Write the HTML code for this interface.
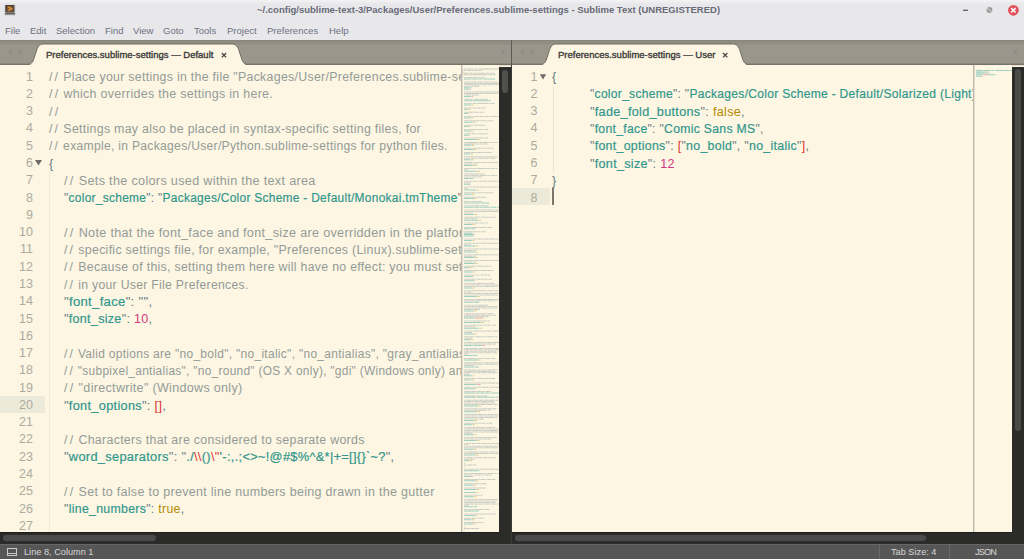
<!DOCTYPE html>
<html><head><meta charset="utf-8">
<style>
*{margin:0;padding:0;box-sizing:border-box}
html,body{width:1024px;height:559px;overflow:hidden;background:#fdf6e3;font-family:"Liberation Sans",sans-serif}
.abs{position:absolute}
#titlebar{left:0;top:0;width:1024px;height:40px;background:linear-gradient(#f3f3f4 0px,#eeeef0 2px,#e8e8eb 4px,#e8e8eb 100%)}
#title{left:257px;top:3px;font-weight:bold;font-size:9.5px;color:#686b78;white-space:nowrap;line-height:14px}
.menu{top:24px;font-size:9.5px;color:#6e7080;line-height:14px;white-space:nowrap}
#tabbar{left:0;top:40px;width:1024px;height:25px;background:linear-gradient(#85817a 0px,#8f8b81 1px,#928e84 4px,#9a968b 5px,#9a968b 100%)}
.tablabel{top:49px;font-weight:normal;font-size:9.5px;color:#3a3a3a;-webkit-text-stroke:0.35px #3a3a3a;white-space:nowrap;line-height:12px}
.pane{top:65px;height:467px;background:#fdf6e3;overflow:hidden}
.cl{position:absolute;font-size:12.5px;letter-spacing:0.3px;line-height:17px;white-space:pre;color:#657b83;transform-origin:0 0}
.ln{position:absolute;font-size:12.5px;line-height:17px;white-space:pre;color:#adab9f;text-align:right}
.c{color:#939b97}
.sl{letter-spacing:2.2px}
.sl2{letter-spacing:1.6px}
.s{color:#31968c;-webkit-text-stroke:0.2px #31968c}
.q{color:#657b83}
.n{color:#d33682}
.k{color:#b58900}
.r{color:#dc322f}
#status{left:0;top:544px;width:1024px;height:15px;background:#565656;border-top:1px solid #666}
.st{top:546px;font-size:9.2px;color:#d6d6d6;line-height:12px;white-space:nowrap}
</style></head><body>
<div id="titlebar" class="abs"></div>
<div id="title" class="abs">~/.config/sublime-text-3/Packages/User/Preferences.sublime-settings - Sublime Text (UNREGISTERED)</div>
<div class="abs menu" style="left:5px">File</div>
<div class="abs menu" style="left:30px">Edit</div>
<div class="abs menu" style="left:56px">Selection</div>
<div class="abs menu" style="left:105px">Find</div>
<div class="abs menu" style="left:133px">View</div>
<div class="abs menu" style="left:163px">Goto</div>
<div class="abs menu" style="left:194px">Tools</div>
<div class="abs menu" style="left:227px">Project</div>
<div class="abs menu" style="left:267px">Preferences</div>
<div class="abs menu" style="left:329px">Help</div>
<svg class="abs" style="left:0;top:0" width="1024" height="22">
  <rect x="4.5" y="4.3" width="11" height="11.2" rx="0.8" fill="#f4f4f4" stroke="#c9c9cc" stroke-width="0.6"/>
  <rect x="5.3" y="5" width="9.2" height="7.6" fill="#3a3735"/>
  <rect x="6.5" y="5.8" width="7" height="6" fill="#7a5530"/>
  <path d="M8.3 7 L11.5 8.8 L8.3 10.6" fill="none" stroke="#d8923f" stroke-width="1.5"/>
  <rect x="5" y="13.2" width="10" height="1.3" fill="#3a3a3a"/>
  <rect x="963" y="9.6" width="5" height="1.4" fill="#6a6a6a"/>
  <circle cx="989.5" cy="10" r="2.9" fill="#9a9a9a"/>
  <path d="M987.3 7.8 L991.7 12.2" stroke="#e8e8eb" stroke-width="0.9"/>
  <circle cx="1013.4" cy="10.3" r="5.4" fill="#e0525c"/>
  <path d="M1011.2 8.1 L1015.6 12.5 M1015.6 8.1 L1011.2 12.5" stroke="#fff" stroke-width="1.6"/>
</svg>
<div id="tabbar" class="abs"></div>
<svg class="abs" style="left:0;top:0" width="1024" height="66" viewBox="0 0 1024 66">
  <rect x="0" y="63.6" width="1024" height="1.6" fill="#77736a"/>
  <path d="M24.2 65.5 C30.2 65.5 32.2 63 33.4 60 L36.9 49.5 C38.2 45.5 40.2 44 44.2 44 L231.3 44 C235.3 44 237.3 45.5 238.6 49.5 L242.1 60 C243.3 63 245.3 65.5 251.3 65.5 Z" fill="#fdf6e3" stroke="#716d63" stroke-width="1"/>
  <rect x="20" y="65" width="240" height="2" fill="#fdf6e3"/>
  <path d="M537.0 65.5 C543.0 65.5 545.0 63 546.2 60 L549.7 49.5 C551.0 45.5 553.0 44 557.0 44 L732.2 44 C736.2 44 738.2 45.5 739.5 49.5 L743.0 60 C744.2 63 746.2 65.5 752.2 65.5 Z" fill="#fdf6e3" stroke="#716d63" stroke-width="1"/>
  <rect x="530" y="65" width="230" height="2" fill="#fdf6e3"/>
  <path d="M12 48.5 L7 52 L12 55.5 Z" fill="#948f85"/>
  <path d="M18 48.5 L23 52 L18 55.5 Z" fill="#948f85"/>
  <path d="M524 48.5 L519 52 L524 55.5 Z" fill="#948f85"/>
  <path d="M530 48.5 L535 52 L530 55.5 Z" fill="#948f85"/>
  <path d="M500.5 50 L506 50 L503.2 54.5 Z" fill="#8e8d89"/>
  <path d="M1012.5 50 L1018 50 L1015.2 54.5 Z" fill="#8e8d89"/>
  <rect x="511" y="40" width="1" height="26" fill="#5e5b55"/>
  <path d="M221.8 53 L226.2 57.4 M226.2 53 L221.8 57.4" stroke="#4a4a48" stroke-width="1.3"/>
  <path d="M723 53 L727.4 57.4 M727.4 53 L723 57.4" stroke="#4a4a48" stroke-width="1.3"/>
</svg>
<div class="abs tablabel" style="left:46px">Preferences.sublime-settings — Default</div>
<div class="abs tablabel" style="left:558px">Preferences.sublime-settings — User</div>

<div class="abs pane" style="left:0;width:462px">
  <div class="abs" style="left:0;top:331.20px;width:45px;height:16.6px;background:#eeead9"></div>
  <div class="abs" style="left:49px;top:106px;width:1px;height:361px;background:#efe9d6"></div>
  <div class="ln" style="left:0;width:33px;top:3.60px">1</div>
<div class="ln" style="left:0;width:33px;top:20.88px">2</div>
<div class="ln" style="left:0;width:33px;top:38.16px">3</div>
<div class="ln" style="left:0;width:33px;top:55.44px">4</div>
<div class="ln" style="left:0;width:33px;top:72.72px">5</div>
<div class="ln" style="left:0;width:33px;top:90.00px">6</div>
<div class="ln" style="left:0;width:33px;top:107.28px">7</div>
<div class="ln" style="left:0;width:33px;top:124.56px">8</div>
<div class="ln" style="left:0;width:33px;top:141.84px">9</div>
<div class="ln" style="left:0;width:33px;top:159.12px">10</div>
<div class="ln" style="left:0;width:33px;top:176.40px">11</div>
<div class="ln" style="left:0;width:33px;top:193.68px">12</div>
<div class="ln" style="left:0;width:33px;top:210.96px">13</div>
<div class="ln" style="left:0;width:33px;top:228.24px">14</div>
<div class="ln" style="left:0;width:33px;top:245.52px">15</div>
<div class="ln" style="left:0;width:33px;top:262.80px">16</div>
<div class="ln" style="left:0;width:33px;top:280.08px">17</div>
<div class="ln" style="left:0;width:33px;top:297.36px">18</div>
<div class="ln" style="left:0;width:33px;top:314.64px">19</div>
<div class="ln" style="left:0;width:33px;top:331.92px">20</div>
<div class="ln" style="left:0;width:33px;top:349.20px">21</div>
<div class="ln" style="left:0;width:33px;top:366.48px">22</div>
<div class="ln" style="left:0;width:33px;top:383.76px">23</div>
<div class="ln" style="left:0;width:33px;top:401.04px">24</div>
<div class="ln" style="left:0;width:33px;top:418.32px">25</div>
<div class="ln" style="left:0;width:33px;top:435.60px">26</div>
<div class="ln" style="left:0;width:33px;top:452.88px">27</div>
  <svg class="abs" style="left:0;top:0" width="60" height="120"><path d="M35 95 L42 95 L38.5 100.5 Z" fill="#6f6b6b"/></svg>
  <div class="cl" id="L1" style="left:49px;top:4.20px;transform:scaleX(0.9870)"><span class="c"><span class="sl">/</span><span class="sl2">/</span> Place your settings in the file "Packages/User/Preferences.sublime-settings",</span></div>
<div class="cl" id="L2" style="left:49px;top:21.48px;transform:scaleX(0.9958)"><span class="c"><span class="sl">/</span><span class="sl2">/</span> which overrides the settings in here.</span></div>
<div class="cl" id="L3" style="left:49px;top:38.76px;transform:scaleX(1.0000)"><span class="c"><span class="sl">/</span><span class="sl2">/</span></span></div>
<div class="cl" id="L4" style="left:49px;top:56.04px;transform:scaleX(0.9879)"><span class="c"><span class="sl">/</span><span class="sl2">/</span> Settings may also be placed in syntax-specific setting files, for</span></div>
<div class="cl" id="L5" style="left:49px;top:73.32px;transform:scaleX(0.9697)"><span class="c"><span class="sl">/</span><span class="sl2">/</span> example, in Packages/User/Python.sublime-settings for python files.</span></div>
<div class="cl" id="L6" style="left:49px;top:90.60px;transform:scaleX(1.0000)"><span class="q">{</span></div>
<div class="cl" id="L7" style="left:64.1px;top:107.88px;transform:scaleX(1.0129)"><span class="c"><span class="sl">/</span><span class="sl2">/</span> Sets the colors used within the text area</span></div>
<div class="cl" id="L8" style="left:64.1px;top:125.16px;transform:scaleX(0.9542)"><span class="q">"</span><span class="s">color_scheme</span><span class="q">": "</span><span class="s">Packages/Color Scheme - Default/Monokai.tmTheme</span><span class="q">",</span></div>
<div class="cl" id="L10" style="left:64.1px;top:159.72px;transform:scaleX(1.0104)"><span class="c"><span class="sl">/</span><span class="sl2">/</span> Note that the font_face and font_size are overridden in the platform</span></div>
<div class="cl" id="L11" style="left:64.1px;top:177.00px;transform:scaleX(0.9872)"><span class="c"><span class="sl">/</span><span class="sl2">/</span> specific settings file, for example, "Preferences (Linux).sublime-settings".</span></div>
<div class="cl" id="L12" style="left:64.1px;top:194.28px;transform:scaleX(0.9862)"><span class="c"><span class="sl">/</span><span class="sl2">/</span> Because of this, setting them here will have no effect: you must set them</span></div>
<div class="cl" id="L13" style="left:64.1px;top:211.56px;transform:scaleX(0.9778)"><span class="c"><span class="sl">/</span><span class="sl2">/</span> in your User File Preferences.</span></div>
<div class="cl" id="L14" style="left:64.1px;top:228.84px;transform:scaleX(1.0465)"><span class="q">"</span><span class="s">font_face</span><span class="q">": "",</span></div>
<div class="cl" id="L15" style="left:64.1px;top:246.12px;transform:scaleX(1.0026)"><span class="q">"</span><span class="s">font_size</span><span class="q">": </span><span class="n">10</span><span class="q">,</span></div>
<div class="cl" id="L17" style="left:64.1px;top:280.68px;transform:scaleX(0.9596)"><span class="c"><span class="sl">/</span><span class="sl2">/</span> Valid options are "no_bold", "no_italic", "no_antialias", "gray_antialias",</span></div>
<div class="cl" id="L18" style="left:64.1px;top:297.96px;transform:scaleX(0.9528)"><span class="c"><span class="sl">/</span><span class="sl2">/</span> "subpixel_antialias", "no_round" (OS X only), "gdi" (Windows only) and</span></div>
<div class="cl" id="L19" style="left:64.1px;top:315.24px;transform:scaleX(1.0046)"><span class="c"><span class="sl">/</span><span class="sl2">/</span> "directwrite" (Windows only)</span></div>
<div class="cl" id="L20" style="left:64.1px;top:332.52px;transform:scaleX(1.0203)"><span class="q">"</span><span class="s">font_options</span><span class="q">": </span><span class="r">[]</span><span class="q">,</span></div>
<div class="cl" id="L22" style="left:64.1px;top:367.08px;transform:scaleX(0.9911)"><span class="c"><span class="sl">/</span><span class="sl2">/</span> Characters that are considered to separate words</span></div>
<div class="cl" id="L23" style="left:64.1px;top:384.36px;transform:scaleX(1.0241)"><span class="q">"</span><span class="s">word_separators</span><span class="q">": "</span><span class="s">./</span><span class="r">\\</span><span class="s">()</span><span class="r">\"</span><span class="s">'-:,.;&lt;&gt;~!@#$%^&amp;*|+=[]{}`~?</span><span class="q">",</span></div>
<div class="cl" id="L25" style="left:64.1px;top:418.92px;transform:scaleX(0.9996)"><span class="c"><span class="sl">/</span><span class="sl2">/</span> Set to false to prevent line numbers being drawn in the gutter</span></div>
<div class="cl" id="L26" style="left:64.1px;top:436.20px;transform:scaleX(0.9854)"><span class="q">"</span><span class="s">line_numbers</span><span class="q">": </span><span class="k">true</span><span class="q">,</span></div>
</div>
<div class="abs pane" style="left:512px;width:462px">
  <div class="abs" style="left:0;top:122.90px;width:38px;height:17px;background:#eeead9"></div>
  <div class="abs" style="left:41px;top:22px;width:1px;height:86px;background:#ebe5d2"></div>
  <div class="ln" style="left:0;width:25.5px;top:3.60px">1</div>
<div class="ln" style="left:0;width:25.5px;top:20.88px">2</div>
<div class="ln" style="left:0;width:25.5px;top:38.16px">3</div>
<div class="ln" style="left:0;width:25.5px;top:55.44px">4</div>
<div class="ln" style="left:0;width:25.5px;top:72.72px">5</div>
<div class="ln" style="left:0;width:25.5px;top:90.00px">6</div>
<div class="ln" style="left:0;width:25.5px;top:107.28px">7</div>
<div class="ln" style="left:0;width:25.5px;top:124.56px">8</div>
  <svg class="abs" style="left:0;top:0" width="60" height="120"><path d="M27.8 9.3 L34.2 9.3 L31 14.6 Z" fill="#6f6b6b"/></svg>
  <div class="cl" id="R1" style="left:40px;top:4.20px;transform:scaleX(1.0000)"><span class="q">{</span></div>
<div class="cl" id="R2" style="left:77.7px;top:21.48px;transform:scaleX(0.9635)"><span class="q">"</span><span class="s">color_scheme</span><span class="q">": "</span><span class="s">Packages/Color Scheme - Default/Solarized (Light).tmTheme</span><span class="q">",</span></div>
<div class="cl" id="R3" style="left:77.7px;top:38.76px;transform:scaleX(1.0110)"><span class="q">"</span><span class="s">fade_fold_buttons</span><span class="q">": </span><span class="k">false</span><span class="q">,</span></div>
<div class="cl" id="R4" style="left:77.7px;top:56.04px;transform:scaleX(0.9761)"><span class="q">"</span><span class="s">font_face</span><span class="q">": "</span><span class="s">Comic Sans MS</span><span class="q">",</span></div>
<div class="cl" id="R5" style="left:77.7px;top:73.32px;transform:scaleX(0.9879)"><span class="q">"</span><span class="s">font_options</span><span class="q">": </span><span class="r">[</span><span class="q">"</span><span class="s">no_bold</span><span class="q">", "</span><span class="s">no_italic</span><span class="q">"</span><span class="r">]</span><span class="q">,</span></div>
<div class="cl" id="R6" style="left:77.7px;top:90.60px;transform:scaleX(1.0050)"><span class="q">"</span><span class="s">font_size</span><span class="q">": </span><span class="n">12</span></div>
<div class="cl" id="R7" style="left:40px;top:107.88px;transform:scaleX(1.0000)"><span class="q">}</span></div>
  <div class="abs" style="left:40px;top:122.90px;width:2px;height:17px;background:#7a766a"></div>
</div>
<div class="abs" style="left:461px;top:65px;width:38px;height:467px;background:#fdf6e3;border-left:1px solid #bfbaac;box-shadow:inset 1px 0 0 #e2ddcf;overflow:hidden"><svg width="37" height="467" style="position:absolute;left:0;top:0"><path d="M0.6 3.5h0.9v1.0h-0.9zM2.0 3.5h2.3v1.0h-2.3zM4.8 3.5h1.9v1.0h-1.9zM7.2 3.5h3.8v1.0h-3.8zM11.4 3.5h0.9v1.0h-0.9zM12.8 3.5h1.4v1.0h-1.4zM14.7 3.5h1.9v1.0h-1.9zM17.1 3.5h21.1v1.0h-21.1zM0.6 4.9h0.9v1.0h-0.9zM2.0 4.9h2.3v1.0h-2.3zM4.8 4.9h4.2v1.0h-4.2zM9.5 4.9h1.4v1.0h-1.4zM11.4 4.9h3.8v1.0h-3.8zM15.6 4.9h0.9v1.0h-0.9zM17.1 4.9h2.3v1.0h-2.3zM0.6 6.4h0.9v1.0h-0.9zM0.6 7.8h0.9v1.0h-0.9zM2.0 7.8h3.8v1.0h-3.8zM6.2 7.8h1.4v1.0h-1.4zM8.1 7.8h1.9v1.0h-1.9zM10.5 7.8h0.9v1.0h-0.9zM11.9 7.8h2.8v1.0h-2.8zM15.2 7.8h0.9v1.0h-0.9zM16.6 7.8h7.0v1.0h-7.0zM24.1 7.8h3.3v1.0h-3.3zM27.9 7.8h2.8v1.0h-2.8zM31.1 7.8h1.4v1.0h-1.4zM0.6 9.3h0.9v1.0h-0.9zM2.0 9.3h3.8v1.0h-3.8zM6.2 9.3h0.9v1.0h-0.9zM7.6 9.3h17.4v1.0h-17.4zM25.5 9.3h1.4v1.0h-1.4zM27.4 9.3h2.8v1.0h-2.8zM30.7 9.3h2.8v1.0h-2.8zM2.0 12.1h0.9v1.0h-0.9zM3.4 12.1h1.9v1.0h-1.9zM5.8 12.1h1.4v1.0h-1.4zM7.6 12.1h2.8v1.0h-2.8zM10.9 12.1h1.9v1.0h-1.9zM13.3 12.1h2.8v1.0h-2.8zM16.6 12.1h1.4v1.0h-1.4zM18.5 12.1h1.9v1.0h-1.9zM20.8 12.1h1.9v1.0h-1.9zM2.0 16.5h0.9v1.0h-0.9zM3.4 16.5h1.9v1.0h-1.9zM5.8 16.5h1.9v1.0h-1.9zM8.1 16.5h1.4v1.0h-1.4zM10.0 16.5h4.2v1.0h-4.2zM14.7 16.5h1.4v1.0h-1.4zM16.6 16.5h4.2v1.0h-4.2zM21.3 16.5h1.4v1.0h-1.4zM23.2 16.5h4.7v1.0h-4.7zM28.3 16.5h0.9v1.0h-0.9zM29.7 16.5h1.4v1.0h-1.4zM31.6 16.5h3.8v1.0h-3.8zM2.0 17.9h0.9v1.0h-0.9zM3.4 17.9h3.8v1.0h-3.8zM7.6 17.9h3.8v1.0h-3.8zM11.9 17.9h2.3v1.0h-2.3zM14.7 17.9h1.4v1.0h-1.4zM16.6 17.9h3.8v1.0h-3.8zM20.8 17.9h5.6v1.0h-5.6zM26.9 17.9h12.2v1.0h-12.2zM2.0 19.3h0.9v1.0h-0.9zM3.4 19.3h3.3v1.0h-3.3zM7.2 19.3h0.9v1.0h-0.9zM8.6 19.3h2.3v1.0h-2.3zM11.4 19.3h3.3v1.0h-3.3zM15.2 19.3h1.9v1.0h-1.9zM17.5 19.3h1.9v1.0h-1.9zM19.9 19.3h1.9v1.0h-1.9zM22.2 19.3h1.9v1.0h-1.9zM24.6 19.3h0.9v1.0h-0.9zM26.0 19.3h3.3v1.0h-3.3zM29.7 19.3h1.4v1.0h-1.4zM31.6 19.3h1.9v1.0h-1.9zM34.0 19.3h1.4v1.0h-1.4zM35.9 19.3h1.9v1.0h-1.9zM2.0 20.8h0.9v1.0h-0.9zM3.4 20.8h0.9v1.0h-0.9zM4.8 20.8h1.9v1.0h-1.9zM7.2 20.8h1.9v1.0h-1.9zM9.5 20.8h1.9v1.0h-1.9zM11.9 20.8h5.6v1.0h-5.6zM2.0 26.5h0.9v1.0h-0.9zM3.4 26.5h2.3v1.0h-2.3zM6.2 26.5h3.3v1.0h-3.3zM10.0 26.5h1.4v1.0h-1.4zM11.9 26.5h4.7v1.0h-4.7zM17.1 26.5h5.6v1.0h-5.6zM23.2 26.5h7.0v1.0h-7.0zM30.7 26.5h8.0v1.0h-8.0zM2.0 28.0h0.9v1.0h-0.9zM3.4 28.0h9.9v1.0h-9.9zM13.8 28.0h4.7v1.0h-4.7zM18.9 28.0h1.4v1.0h-1.4zM20.8 28.0h0.5v1.0h-0.5zM21.8 28.0h2.8v1.0h-2.8zM25.0 28.0h2.3v1.0h-2.3zM27.9 28.0h3.8v1.0h-3.8zM32.1 28.0h2.3v1.0h-2.3zM34.9 28.0h1.4v1.0h-1.4zM2.0 29.4h0.9v1.0h-0.9zM3.4 29.4h6.1v1.0h-6.1zM10.0 29.4h3.8v1.0h-3.8zM14.2 29.4h2.3v1.0h-2.3zM2.0 33.7h0.9v1.0h-0.9zM3.4 33.7h4.7v1.0h-4.7zM8.6 33.7h1.9v1.0h-1.9zM10.9 33.7h1.4v1.0h-1.4zM12.8 33.7h4.7v1.0h-4.7zM18.0 33.7h0.9v1.0h-0.9zM19.4 33.7h3.8v1.0h-3.8zM23.6 33.7h2.3v1.0h-2.3zM2.0 38.1h0.9v1.0h-0.9zM3.4 38.1h1.4v1.0h-1.4zM5.3 38.1h0.9v1.0h-0.9zM6.7 38.1h2.3v1.0h-2.3zM9.5 38.1h0.9v1.0h-0.9zM10.9 38.1h3.3v1.0h-3.3zM14.7 38.1h1.9v1.0h-1.9zM17.1 38.1h3.3v1.0h-3.3zM20.8 38.1h2.3v1.0h-2.3zM23.6 38.1h2.3v1.0h-2.3zM26.4 38.1h0.9v1.0h-0.9zM27.9 38.1h1.4v1.0h-1.4zM29.7 38.1h2.8v1.0h-2.8zM2.0 42.4h0.9v1.0h-0.9zM3.4 42.4h1.4v1.0h-1.4zM5.3 42.4h0.9v1.0h-0.9zM6.7 42.4h2.3v1.0h-2.3zM9.5 42.4h0.9v1.0h-0.9zM10.9 42.4h1.9v1.0h-1.9zM13.3 42.4h1.4v1.0h-1.4zM15.2 42.4h2.8v1.0h-2.8zM18.5 42.4h4.7v1.0h-4.7zM2.0 46.7h0.9v1.0h-0.9zM3.4 46.7h3.3v1.0h-3.3zM7.2 46.7h3.3v1.0h-3.3zM10.9 46.7h1.4v1.0h-1.4zM12.8 46.7h2.8v1.0h-2.8zM16.1 46.7h1.4v1.0h-1.4zM18.0 46.7h1.4v1.0h-1.4zM19.9 46.7h1.9v1.0h-1.9zM2.0 51.0h0.9v1.0h-0.9zM3.4 51.0h1.9v1.0h-1.9zM5.8 51.0h3.3v1.0h-3.3zM9.5 51.0h1.4v1.0h-1.4zM11.4 51.0h1.4v1.0h-1.4zM13.3 51.0h4.2v1.0h-4.2zM18.0 51.0h2.3v1.0h-2.3zM20.8 51.0h0.9v1.0h-0.9zM22.2 51.0h1.4v1.0h-1.4zM24.1 51.0h2.8v1.0h-2.8zM27.4 51.0h0.9v1.0h-0.9zM28.8 51.0h1.9v1.0h-1.9zM31.1 51.0h3.3v1.0h-3.3zM34.9 51.0h0.9v1.0h-0.9zM36.3 51.0h1.9v1.0h-1.9zM2.0 55.3h0.9v1.0h-0.9zM3.4 55.3h2.3v1.0h-2.3zM6.2 55.3h1.4v1.0h-1.4zM8.1 55.3h1.9v1.0h-1.9zM10.5 55.3h3.3v1.0h-3.3zM14.2 55.3h2.8v1.0h-2.8zM17.5 55.3h1.4v1.0h-1.4zM19.4 55.3h2.3v1.0h-2.3zM22.2 55.3h0.9v1.0h-0.9zM23.6 55.3h1.9v1.0h-1.9zM26.0 55.3h1.4v1.0h-1.4zM27.9 55.3h2.8v1.0h-2.8zM2.0 59.7h0.9v1.0h-0.9zM3.4 59.7h3.3v1.0h-3.3zM7.2 59.7h0.9v1.0h-0.9zM8.6 59.7h2.3v1.0h-2.3zM11.4 59.7h0.9v1.0h-0.9zM12.8 59.7h3.3v1.0h-3.3zM16.6 59.7h3.8v1.0h-3.8zM20.8 59.7h2.8v1.0h-2.8zM2.0 64.0h0.9v1.0h-0.9zM3.4 64.0h1.4v1.0h-1.4zM5.3 64.0h0.9v1.0h-0.9zM6.7 64.0h1.9v1.0h-1.9zM9.1 64.0h0.9v1.0h-0.9zM10.5 64.0h1.9v1.0h-1.9zM12.8 64.0h2.3v1.0h-2.3zM15.6 64.0h3.8v1.0h-3.8zM19.9 64.0h0.9v1.0h-0.9zM21.3 64.0h0.9v1.0h-0.9zM22.7 64.0h3.3v1.0h-3.3zM2.0 68.3h0.9v1.0h-0.9zM3.4 68.3h1.4v1.0h-1.4zM5.3 68.3h2.8v1.0h-2.8zM8.6 68.3h0.9v1.0h-0.9zM10.0 68.3h2.8v1.0h-2.8zM13.3 68.3h0.5v1.0h-0.5zM14.2 68.3h1.4v1.0h-1.4zM16.1 68.3h0.9v1.0h-0.9zM17.5 68.3h4.7v1.0h-4.7zM22.7 68.3h2.3v1.0h-2.3zM25.5 68.3h0.9v1.0h-0.9zM2.0 72.6h0.9v1.0h-0.9zM3.4 72.6h1.4v1.0h-1.4zM5.3 72.6h0.9v1.0h-0.9zM6.7 72.6h1.9v1.0h-1.9zM9.1 72.6h0.9v1.0h-0.9zM10.5 72.6h2.8v1.0h-2.8zM13.8 72.6h2.8v1.0h-2.8zM17.1 72.6h1.9v1.0h-1.9zM19.4 72.6h1.4v1.0h-1.4zM21.3 72.6h0.9v1.0h-0.9zM22.7 72.6h3.3v1.0h-3.3zM2.0 76.9h0.9v1.0h-0.9zM3.4 76.9h0.9v1.0h-0.9zM4.8 76.9h11.3v1.0h-11.3zM16.6 76.9h0.9v1.0h-0.9zM18.0 76.9h2.3v1.0h-2.3zM20.8 76.9h6.1v1.0h-6.1zM27.4 76.9h1.9v1.0h-1.9zM29.7 76.9h1.9v1.0h-1.9zM32.1 76.9h1.4v1.0h-1.4zM34.0 76.9h1.4v1.0h-1.4zM2.0 78.4h0.9v1.0h-0.9zM3.4 78.4h4.2v1.0h-4.2zM8.1 78.4h6.1v1.0h-6.1zM14.7 78.4h0.9v1.0h-0.9zM16.1 78.4h0.9v1.0h-0.9zM17.5 78.4h1.4v1.0h-1.4zM19.4 78.4h1.9v1.0h-1.9zM21.8 78.4h3.3v1.0h-3.3zM2.0 82.7h0.9v1.0h-0.9zM3.4 82.7h1.4v1.0h-1.4zM5.3 82.7h0.9v1.0h-0.9zM6.7 82.7h2.3v1.0h-2.3zM9.5 82.7h0.9v1.0h-0.9zM10.9 82.7h3.3v1.0h-3.3zM14.7 82.7h4.2v1.0h-4.2zM19.4 82.7h0.9v1.0h-0.9zM20.8 82.7h1.9v1.0h-1.9zM23.2 82.7h1.4v1.0h-1.4zM25.0 82.7h2.8v1.0h-2.8zM28.3 82.7h0.9v1.0h-0.9zM29.7 82.7h1.9v1.0h-1.9zM2.0 87.0h0.9v1.0h-0.9zM3.4 87.0h4.7v1.0h-4.7zM8.6 87.0h5.2v1.0h-5.2zM14.2 87.0h6.1v1.0h-6.1zM20.8 87.0h1.9v1.0h-1.9zM23.2 87.0h3.8v1.0h-3.8zM27.4 87.0h2.3v1.0h-2.3zM2.0 91.3h0.9v1.0h-0.9zM3.4 91.3h2.3v1.0h-2.3zM6.2 91.3h1.9v1.0h-1.9zM8.6 91.3h2.8v1.0h-2.8zM11.9 91.3h0.5v1.0h-0.5zM12.8 91.3h2.8v1.0h-2.8zM16.1 91.3h3.8v1.0h-3.8zM20.3 91.3h2.3v1.0h-2.3zM23.2 91.3h0.9v1.0h-0.9zM24.6 91.3h4.2v1.0h-4.2zM29.3 91.3h1.4v1.0h-1.4zM31.1 91.3h1.9v1.0h-1.9zM33.5 91.3h1.9v1.0h-1.9zM2.0 92.8h0.9v1.0h-0.9zM3.4 92.8h2.3v1.0h-2.3zM6.2 92.8h0.9v1.0h-0.9zM7.6 92.8h0.9v1.0h-0.9zM9.1 92.8h4.2v1.0h-4.2zM13.8 92.8h0.9v1.0h-0.9zM15.2 92.8h0.9v1.0h-0.9zM16.6 92.8h3.8v1.0h-3.8zM20.8 92.8h5.2v1.0h-5.2zM26.4 92.8h0.9v1.0h-0.9zM27.9 92.8h0.9v1.0h-0.9zM29.3 92.8h3.8v1.0h-3.8zM2.0 97.1h0.9v1.0h-0.9zM3.4 97.1h1.9v1.0h-1.9zM5.8 97.1h4.7v1.0h-4.7zM10.9 97.1h0.9v1.0h-0.9zM12.3 97.1h0.9v1.0h-0.9zM13.8 97.1h1.4v1.0h-1.4zM15.6 97.1h2.3v1.0h-2.3zM18.5 97.1h1.9v1.0h-1.9zM20.8 97.1h3.3v1.0h-3.3zM24.6 97.1h1.9v1.0h-1.9zM26.9 97.1h4.7v1.0h-4.7zM32.1 97.1h3.8v1.0h-3.8zM2.0 98.5h0.9v1.0h-0.9zM3.4 98.5h5.2v1.0h-5.2zM9.1 98.5h0.9v1.0h-0.9zM10.5 98.5h0.9v1.0h-0.9zM11.9 98.5h3.8v1.0h-3.8zM2.0 102.9h0.9v1.0h-0.9zM3.4 102.9h2.3v1.0h-2.3zM6.2 102.9h2.3v1.0h-2.3zM9.1 102.9h2.3v1.0h-2.3zM11.9 102.9h2.3v1.0h-2.3zM14.7 102.9h0.9v1.0h-0.9zM16.1 102.9h5.2v1.0h-5.2zM21.8 102.9h1.9v1.0h-1.9zM24.1 102.9h2.8v1.0h-2.8zM27.4 102.9h1.4v1.0h-1.4zM29.3 102.9h2.3v1.0h-2.3zM32.1 102.9h1.4v1.0h-1.4zM34.0 102.9h1.4v1.0h-1.4zM2.0 104.3h0.9v1.0h-0.9zM3.4 104.3h2.3v1.0h-2.3zM2.0 108.6h0.9v1.0h-0.9zM3.4 108.6h3.8v1.0h-3.8zM7.6 108.6h4.7v1.0h-4.7zM12.8 108.6h4.2v1.0h-4.2zM17.5 108.6h0.9v1.0h-0.9zM18.9 108.6h3.8v1.0h-3.8zM2.0 110.1h0.9v1.0h-0.9zM3.4 110.1h1.4v1.0h-1.4zM5.3 110.1h0.9v1.0h-0.9zM6.7 110.1h1.4v1.0h-1.4zM8.6 110.1h0.9v1.0h-0.9zM10.0 110.1h2.3v1.0h-2.3zM12.8 110.1h2.8v1.0h-2.8zM16.1 110.1h0.9v1.0h-0.9zM17.5 110.1h3.3v1.0h-3.3zM21.3 110.1h2.3v1.0h-2.3zM24.1 110.1h0.9v1.0h-0.9zM25.5 110.1h1.9v1.0h-1.9zM27.9 110.1h0.9v1.0h-0.9zM29.3 110.1h3.8v1.0h-3.8zM33.5 110.1h1.4v1.0h-1.4zM2.0 111.5h0.9v1.0h-0.9zM3.4 111.5h2.8v1.0h-2.8zM6.7 111.5h2.3v1.0h-2.3zM9.5 111.5h1.4v1.0h-1.4zM11.4 111.5h4.2v1.0h-4.2zM16.1 111.5h3.8v1.0h-3.8zM2.0 115.8h0.9v1.0h-0.9zM3.4 115.8h1.4v1.0h-1.4zM5.3 115.8h0.9v1.0h-0.9zM6.7 115.8h0.5v1.0h-0.5zM7.6 115.8h2.3v1.0h-2.3zM10.5 115.8h2.3v1.0h-2.3zM13.3 115.8h1.9v1.0h-1.9zM15.6 115.8h0.5v1.0h-0.5zM16.6 115.8h0.9v1.0h-0.9zM18.0 115.8h2.3v1.0h-2.3zM20.8 115.8h3.8v1.0h-3.8zM25.0 115.8h0.9v1.0h-0.9zM26.4 115.8h1.9v1.0h-1.9zM28.8 115.8h2.8v1.0h-2.8zM32.1 115.8h2.8v1.0h-2.8zM35.4 115.8h1.9v1.0h-1.9zM2.0 117.3h0.9v1.0h-0.9zM3.4 117.3h2.8v1.0h-2.8zM6.7 117.3h2.3v1.0h-2.3zM2.0 121.6h0.9v1.0h-0.9zM3.4 121.6h1.4v1.0h-1.4zM5.3 121.6h0.9v1.0h-0.9zM6.7 121.6h2.3v1.0h-2.3zM9.5 121.6h0.9v1.0h-0.9zM10.9 121.6h3.3v1.0h-3.3zM14.7 121.6h1.9v1.0h-1.9zM17.1 121.6h3.3v1.0h-3.3zM20.8 121.6h2.3v1.0h-2.3zM23.6 121.6h1.9v1.0h-1.9zM26.0 121.6h2.3v1.0h-2.3zM28.8 121.6h3.8v1.0h-3.8zM33.0 121.6h0.9v1.0h-0.9zM34.4 121.6h1.4v1.0h-1.4zM36.3 121.6h1.9v1.0h-1.9zM2.0 123.0h0.9v1.0h-0.9zM3.4 123.0h2.3v1.0h-2.3zM2.0 127.3h0.9v1.0h-0.9zM3.4 127.3h2.3v1.0h-2.3zM6.2 127.3h1.9v1.0h-1.9zM8.6 127.3h3.8v1.0h-3.8zM12.8 127.3h0.9v1.0h-0.9zM14.2 127.3h1.4v1.0h-1.4zM16.1 127.3h2.8v1.0h-2.8zM19.4 127.3h2.8v1.0h-2.8zM22.7 127.3h1.9v1.0h-1.9zM25.0 127.3h1.9v1.0h-1.9zM27.4 127.3h3.3v1.0h-3.3zM2.0 131.7h0.9v1.0h-0.9zM3.4 131.7h3.8v1.0h-3.8zM7.6 131.7h1.9v1.0h-1.9zM10.0 131.7h3.3v1.0h-3.3zM13.8 131.7h0.9v1.0h-0.9zM15.2 131.7h3.3v1.0h-3.3zM18.9 131.7h3.8v1.0h-3.8zM23.2 131.7h1.4v1.0h-1.4zM2.0 136.0h0.9v1.0h-0.9zM3.4 136.0h1.9v1.0h-1.9zM5.8 136.0h1.9v1.0h-1.9zM8.1 136.0h0.9v1.0h-0.9zM9.5 136.0h1.4v1.0h-1.4zM11.4 136.0h1.4v1.0h-1.4zM13.3 136.0h2.3v1.0h-2.3zM16.1 136.0h3.8v1.0h-3.8zM2.0 140.3h0.9v1.0h-0.9zM3.4 140.3h1.9v1.0h-1.9zM5.8 140.3h2.3v1.0h-2.3zM8.6 140.3h2.8v1.0h-2.8zM11.9 140.3h1.4v1.0h-1.4zM13.8 140.3h3.3v1.0h-3.3zM17.5 140.3h1.4v1.0h-1.4zM19.4 140.3h3.8v1.0h-3.8zM23.6 140.3h2.8v1.0h-2.8zM2.0 144.6h0.9v1.0h-0.9zM3.4 144.6h1.4v1.0h-1.4zM5.3 144.6h0.9v1.0h-0.9zM6.7 144.6h1.9v1.0h-1.9zM9.1 144.6h0.9v1.0h-0.9zM10.5 144.6h1.9v1.0h-1.9zM12.8 144.6h0.5v1.0h-0.5zM13.8 144.6h2.8v1.0h-2.8zM17.1 144.6h2.8v1.0h-2.8zM20.3 144.6h1.4v1.0h-1.4zM22.2 144.6h3.3v1.0h-3.3zM26.0 144.6h4.2v1.0h-4.2zM30.7 144.6h0.9v1.0h-0.9zM32.1 144.6h1.4v1.0h-1.4zM34.0 144.6h3.8v1.0h-3.8zM2.0 146.1h0.9v1.0h-0.9zM3.4 146.1h1.4v1.0h-1.4zM5.3 146.1h2.3v1.0h-2.3zM8.1 146.1h0.9v1.0h-0.9zM9.5 146.1h1.4v1.0h-1.4zM11.4 146.1h2.8v1.0h-2.8zM14.7 146.1h1.9v1.0h-1.9zM17.1 146.1h0.9v1.0h-0.9zM18.5 146.1h4.7v1.0h-4.7zM23.6 146.1h0.9v1.0h-0.9zM25.0 146.1h1.4v1.0h-1.4zM26.9 146.1h7.0v1.0h-7.0zM34.4 146.1h1.4v1.0h-1.4zM36.3 146.1h0.9v1.0h-0.9zM2.0 147.5h0.9v1.0h-0.9zM3.4 147.5h1.4v1.0h-1.4zM5.3 147.5h2.3v1.0h-2.3zM8.1 147.5h2.8v1.0h-2.8zM2.0 151.8h0.9v1.0h-0.9zM3.4 151.8h2.8v1.0h-2.8zM6.7 151.8h4.2v1.0h-4.2zM11.4 151.8h1.4v1.0h-1.4zM13.3 151.8h3.8v1.0h-3.8zM17.5 151.8h0.9v1.0h-0.9zM18.9 151.8h1.4v1.0h-1.4zM20.8 151.8h3.8v1.0h-3.8zM25.0 151.8h0.9v1.0h-0.9zM26.4 151.8h3.3v1.0h-3.3zM30.2 151.8h0.9v1.0h-0.9zM31.6 151.8h1.9v1.0h-1.9zM2.0 153.3h0.9v1.0h-0.9zM3.4 153.3h3.3v1.0h-3.3zM7.2 153.3h0.9v1.0h-0.9zM8.6 153.3h0.9v1.0h-0.9zM10.0 153.3h2.3v1.0h-2.3zM12.8 153.3h1.9v1.0h-1.9zM2.0 157.6h0.9v1.0h-0.9zM3.4 157.6h0.9v1.0h-0.9zM4.8 157.6h3.8v1.0h-3.8zM9.1 157.6h1.9v1.0h-1.9zM11.4 157.6h4.2v1.0h-4.2zM16.1 157.6h1.4v1.0h-1.4zM18.0 157.6h1.9v1.0h-1.9zM20.3 157.6h1.9v1.0h-1.9zM22.7 157.6h0.5v1.0h-0.5zM23.6 157.6h2.3v1.0h-2.3zM2.0 161.9h0.9v1.0h-0.9zM3.4 161.9h2.3v1.0h-2.3zM6.2 161.9h2.8v1.0h-2.8zM9.5 161.9h1.4v1.0h-1.4zM11.4 161.9h4.2v1.0h-4.2zM16.1 161.9h3.8v1.0h-3.8zM20.3 161.9h3.3v1.0h-3.3zM24.1 161.9h1.4v1.0h-1.4zM26.0 161.9h3.8v1.0h-3.8zM2.0 166.2h0.9v1.0h-0.9zM3.4 166.2h2.3v1.0h-2.3zM6.2 166.2h3.8v1.0h-3.8zM10.5 166.2h3.3v1.0h-3.3zM14.2 166.2h1.4v1.0h-1.4zM16.1 166.2h1.9v1.0h-1.9zM18.5 166.2h0.9v1.0h-0.9zM19.9 166.2h1.4v1.0h-1.4zM21.8 166.2h2.3v1.0h-2.3zM2.0 173.4h0.9v1.0h-0.9zM3.4 173.4h1.4v1.0h-1.4zM5.3 173.4h0.9v1.0h-0.9zM6.7 173.4h2.3v1.0h-2.3zM9.5 173.4h0.9v1.0h-0.9zM10.9 173.4h3.3v1.0h-3.3zM14.7 173.4h5.2v1.0h-5.2zM20.3 173.4h1.4v1.0h-1.4zM22.2 173.4h3.8v1.0h-3.8zM26.4 173.4h5.2v1.0h-5.2zM32.1 173.4h1.4v1.0h-1.4zM34.0 173.4h2.3v1.0h-2.3zM2.0 177.7h0.9v1.0h-0.9zM3.4 177.7h1.4v1.0h-1.4zM5.3 177.7h0.9v1.0h-0.9zM6.7 177.7h2.3v1.0h-2.3zM9.5 177.7h0.9v1.0h-0.9zM10.9 177.7h2.3v1.0h-2.3zM13.8 177.7h2.8v1.0h-2.8zM17.1 177.7h1.9v1.0h-1.9zM19.4 177.7h4.2v1.0h-4.2zM24.1 177.7h1.4v1.0h-1.4zM26.0 177.7h3.8v1.0h-3.8zM30.2 177.7h1.9v1.0h-1.9zM32.6 177.7h1.4v1.0h-1.4zM34.4 177.7h2.3v1.0h-2.3zM2.0 179.2h0.9v1.0h-0.9zM3.4 179.2h1.9v1.0h-1.9zM5.8 179.2h0.9v1.0h-0.9zM7.2 179.2h1.4v1.0h-1.4zM2.0 183.5h0.9v1.0h-0.9zM3.4 183.5h1.4v1.0h-1.4zM5.3 183.5h0.9v1.0h-0.9zM6.7 183.5h2.3v1.0h-2.3zM9.5 183.5h0.9v1.0h-0.9zM10.9 183.5h1.4v1.0h-1.4zM12.8 183.5h4.2v1.0h-4.2zM17.5 183.5h2.8v1.0h-2.8zM20.8 183.5h4.2v1.0h-4.2zM25.5 183.5h1.9v1.0h-1.9zM27.9 183.5h1.9v1.0h-1.9zM30.2 183.5h2.3v1.0h-2.3zM33.0 183.5h2.8v1.0h-2.8zM36.3 183.5h0.9v1.0h-0.9zM2.0 184.9h0.9v1.0h-0.9zM3.4 184.9h6.6v1.0h-6.6zM10.5 184.9h0.9v1.0h-0.9zM11.9 184.9h1.9v1.0h-1.9zM2.0 189.3h0.9v1.0h-0.9zM3.4 189.3h1.4v1.0h-1.4zM5.3 189.3h0.9v1.0h-0.9zM6.7 189.3h2.3v1.0h-2.3zM9.5 189.3h0.9v1.0h-0.9zM10.9 189.3h1.4v1.0h-1.4zM12.8 189.3h4.2v1.0h-4.2zM17.5 189.3h2.3v1.0h-2.3zM20.3 189.3h4.2v1.0h-4.2zM25.0 189.3h1.9v1.0h-1.9zM27.4 189.3h1.9v1.0h-1.9zM29.7 189.3h2.3v1.0h-2.3zM32.6 189.3h2.8v1.0h-2.8zM35.9 189.3h0.9v1.0h-0.9zM2.0 190.7h0.9v1.0h-0.9zM3.4 190.7h6.6v1.0h-6.6zM10.5 190.7h0.9v1.0h-0.9zM11.9 190.7h1.9v1.0h-1.9zM2.0 195.0h0.9v1.0h-0.9zM3.4 195.0h1.4v1.0h-1.4zM5.3 195.0h0.9v1.0h-0.9zM6.7 195.0h2.3v1.0h-2.3zM9.5 195.0h0.9v1.0h-0.9zM10.9 195.0h1.4v1.0h-1.4zM12.8 195.0h4.2v1.0h-4.2zM17.5 195.0h2.3v1.0h-2.3zM20.3 195.0h4.2v1.0h-4.2zM25.0 195.0h1.9v1.0h-1.9zM27.4 195.0h1.9v1.0h-1.9zM29.7 195.0h2.3v1.0h-2.3zM32.6 195.0h2.8v1.0h-2.8zM35.9 195.0h0.9v1.0h-0.9zM2.0 196.5h0.9v1.0h-0.9zM3.4 196.5h6.6v1.0h-6.6zM10.5 196.5h0.9v1.0h-0.9zM11.9 196.5h1.9v1.0h-1.9zM2.0 200.8h0.9v1.0h-0.9zM3.4 200.8h2.8v1.0h-2.8zM6.7 200.8h6.1v1.0h-6.1zM13.3 200.8h0.9v1.0h-0.9zM14.7 200.8h1.4v1.0h-1.4zM16.6 200.8h3.8v1.0h-3.8zM20.8 200.8h1.4v1.0h-1.4zM22.7 200.8h0.9v1.0h-0.9zM24.1 200.8h1.9v1.0h-1.9zM26.4 200.8h1.4v1.0h-1.4zM28.3 200.8h1.4v1.0h-1.4zM2.0 205.1h0.9v1.0h-0.9zM3.4 205.1h4.7v1.0h-4.7zM8.6 205.1h2.3v1.0h-2.3zM11.4 205.1h5.2v1.0h-5.2zM17.1 205.1h0.9v1.0h-0.9zM18.5 205.1h1.4v1.0h-1.4zM20.3 205.1h4.2v1.0h-4.2zM25.0 205.1h3.8v1.0h-3.8zM29.3 205.1h1.9v1.0h-1.9zM2.0 209.4h0.9v1.0h-0.9zM3.4 209.4h4.7v1.0h-4.7zM8.6 209.4h3.3v1.0h-3.3zM12.3 209.4h0.9v1.0h-0.9zM13.8 209.4h1.4v1.0h-1.4zM15.6 209.4h1.4v1.0h-1.4zM17.5 209.4h0.9v1.0h-0.9zM18.9 209.4h1.9v1.0h-1.9zM21.3 209.4h2.3v1.0h-2.3zM24.1 209.4h0.9v1.0h-0.9zM25.5 209.4h2.8v1.0h-2.8zM2.0 213.7h0.9v1.0h-0.9zM3.4 213.7h4.7v1.0h-4.7zM8.6 213.7h3.3v1.0h-3.3zM12.3 213.7h0.9v1.0h-0.9zM13.8 213.7h1.4v1.0h-1.4zM15.6 213.7h2.8v1.0h-2.8zM18.9 213.7h0.9v1.0h-0.9zM20.3 213.7h1.9v1.0h-1.9zM22.7 213.7h2.3v1.0h-2.3zM25.5 213.7h0.9v1.0h-0.9zM26.9 213.7h2.8v1.0h-2.8zM2.0 218.1h0.9v1.0h-0.9zM3.4 218.1h1.4v1.0h-1.4zM5.3 218.1h0.9v1.0h-0.9zM6.7 218.1h2.3v1.0h-2.3zM9.5 218.1h0.9v1.0h-0.9zM10.9 218.1h3.3v1.0h-3.3zM14.7 218.1h4.2v1.0h-4.2zM19.4 218.1h1.9v1.0h-1.9zM21.8 218.1h1.4v1.0h-1.4zM23.6 218.1h1.4v1.0h-1.4zM25.5 218.1h0.9v1.0h-0.9zM26.9 218.1h1.4v1.0h-1.4zM28.8 218.1h3.3v1.0h-3.3zM2.0 219.5h0.9v1.0h-0.9zM3.4 219.5h0.9v1.0h-0.9zM4.8 219.5h0.9v1.0h-0.9zM6.2 219.5h0.9v1.0h-0.9zM7.6 219.5h1.9v1.0h-1.9zM10.0 219.5h2.3v1.0h-2.3zM12.8 219.5h0.9v1.0h-0.9zM14.2 219.5h4.7v1.0h-4.7zM19.4 219.5h0.9v1.0h-0.9zM20.8 219.5h1.4v1.0h-1.4zM22.7 219.5h3.8v1.0h-3.8zM26.9 219.5h3.8v1.0h-3.8zM31.1 219.5h4.2v1.0h-4.2zM35.9 219.5h0.9v1.0h-0.9zM2.0 220.9h0.9v1.0h-0.9zM3.4 220.9h2.8v1.0h-2.8zM6.7 220.9h1.9v1.0h-1.9zM9.1 220.9h0.9v1.0h-0.9zM10.5 220.9h2.3v1.0h-2.3zM13.3 220.9h1.9v1.0h-1.9zM15.6 220.9h1.9v1.0h-1.9zM18.0 220.9h0.9v1.0h-0.9zM19.4 220.9h1.9v1.0h-1.9zM21.8 220.9h1.9v1.0h-1.9zM24.1 220.9h3.8v1.0h-3.8zM28.3 220.9h0.9v1.0h-0.9zM29.7 220.9h3.8v1.0h-3.8zM34.0 220.9h1.4v1.0h-1.4zM2.0 225.3h0.9v1.0h-0.9zM3.4 225.3h1.9v1.0h-1.9zM5.8 225.3h3.8v1.0h-3.8zM10.0 225.3h1.9v1.0h-1.9zM12.3 225.3h3.3v1.0h-3.3zM16.1 225.3h1.9v1.0h-1.9zM18.5 225.3h3.8v1.0h-3.8zM22.7 225.3h0.9v1.0h-0.9zM24.1 225.3h0.9v1.0h-0.9zM25.5 225.3h1.9v1.0h-1.9zM27.9 225.3h1.9v1.0h-1.9zM30.2 225.3h0.9v1.0h-0.9zM31.6 225.3h1.4v1.0h-1.4zM33.5 225.3h2.3v1.0h-2.3zM2.0 226.7h0.9v1.0h-0.9zM3.4 226.7h0.9v1.0h-0.9zM4.8 226.7h1.9v1.0h-1.9zM7.2 226.7h2.3v1.0h-2.3zM2.0 228.1h0.9v1.0h-0.9zM3.4 228.1h0.9v1.0h-0.9zM4.8 228.1h0.9v1.0h-0.9zM6.2 228.1h0.9v1.0h-0.9zM7.6 228.1h1.9v1.0h-1.9zM10.0 228.1h2.3v1.0h-2.3zM12.8 228.1h0.9v1.0h-0.9zM14.2 228.1h4.7v1.0h-4.7zM19.4 228.1h0.9v1.0h-0.9zM20.8 228.1h1.4v1.0h-1.4zM22.7 228.1h3.8v1.0h-3.8zM26.9 228.1h3.8v1.0h-3.8zM31.1 228.1h4.2v1.0h-4.2zM35.9 228.1h0.9v1.0h-0.9zM2.0 229.6h0.9v1.0h-0.9zM3.4 229.6h2.8v1.0h-2.8zM6.7 229.6h1.9v1.0h-1.9zM9.1 229.6h0.9v1.0h-0.9zM10.5 229.6h2.3v1.0h-2.3zM13.3 229.6h1.9v1.0h-1.9zM15.6 229.6h1.9v1.0h-1.9zM18.0 229.6h0.9v1.0h-0.9zM19.4 229.6h1.9v1.0h-1.9zM21.8 229.6h1.9v1.0h-1.9zM24.1 229.6h3.8v1.0h-3.8zM28.3 229.6h0.9v1.0h-0.9zM29.7 229.6h3.8v1.0h-3.8zM34.0 229.6h1.4v1.0h-1.4zM2.0 233.9h0.9v1.0h-0.9zM3.4 233.9h1.4v1.0h-1.4zM5.3 233.9h0.9v1.0h-0.9zM6.7 233.9h2.8v1.0h-2.8zM10.0 233.9h0.9v1.0h-0.9zM11.4 233.9h1.9v1.0h-1.9zM13.8 233.9h1.4v1.0h-1.4zM15.6 233.9h3.3v1.0h-3.3zM19.4 233.9h2.3v1.0h-2.3zM22.2 233.9h2.8v1.0h-2.8zM25.5 233.9h5.2v1.0h-5.2zM31.1 233.9h0.9v1.0h-0.9zM32.6 233.9h1.9v1.0h-1.9zM34.9 233.9h1.9v1.0h-1.9zM2.0 235.3h0.9v1.0h-0.9zM3.4 235.3h2.3v1.0h-2.3zM6.2 235.3h2.3v1.0h-2.3zM9.1 235.3h2.8v1.0h-2.8zM12.3 235.3h1.4v1.0h-1.4zM14.2 235.3h4.7v1.0h-4.7zM19.4 235.3h1.4v1.0h-1.4zM21.3 235.3h2.3v1.0h-2.3zM24.1 235.3h0.9v1.0h-0.9zM25.5 235.3h1.9v1.0h-1.9zM27.9 235.3h1.4v1.0h-1.4zM29.7 235.3h2.3v1.0h-2.3zM32.6 235.3h2.3v1.0h-2.3zM2.0 239.7h0.9v1.0h-0.9zM3.4 239.7h1.4v1.0h-1.4zM5.3 239.7h0.9v1.0h-0.9zM6.7 239.7h2.3v1.0h-2.3zM9.5 239.7h0.9v1.0h-0.9zM10.9 239.7h1.9v1.0h-1.9zM13.3 239.7h1.4v1.0h-1.4zM15.2 239.7h1.4v1.0h-1.4zM17.1 239.7h5.2v1.0h-5.2zM22.7 239.7h3.3v1.0h-3.3zM2.0 241.1h0.9v1.0h-0.9zM3.4 241.1h1.4v1.0h-1.4zM5.3 241.1h2.3v1.0h-2.3zM8.1 241.1h1.4v1.0h-1.4zM10.0 241.1h2.3v1.0h-2.3zM12.8 241.1h0.9v1.0h-0.9zM14.2 241.1h1.4v1.0h-1.4zM16.1 241.1h2.8v1.0h-2.8zM19.4 241.1h2.8v1.0h-2.8zM22.7 241.1h1.4v1.0h-1.4zM24.6 241.1h0.9v1.0h-0.9zM26.0 241.1h4.7v1.0h-4.7zM31.1 241.1h0.9v1.0h-0.9zM32.6 241.1h3.3v1.0h-3.3zM2.0 242.5h0.9v1.0h-0.9zM3.4 242.5h1.4v1.0h-1.4zM5.3 242.5h6.1v1.0h-6.1zM11.9 242.5h3.8v1.0h-3.8zM16.1 242.5h2.3v1.0h-2.3zM18.9 242.5h1.4v1.0h-1.4zM20.8 242.5h4.7v1.0h-4.7zM26.0 242.5h1.4v1.0h-1.4zM27.9 242.5h2.8v1.0h-2.8zM31.1 242.5h3.8v1.0h-3.8zM2.0 244.0h0.9v1.0h-0.9zM3.4 244.0h6.1v1.0h-6.1zM10.0 244.0h1.4v1.0h-1.4zM11.9 244.0h5.6v1.0h-5.6zM2.0 248.3h0.9v1.0h-0.9zM3.4 248.3h3.8v1.0h-3.8zM7.6 248.3h1.4v1.0h-1.4zM9.5 248.3h1.4v1.0h-1.4zM11.4 248.3h2.8v1.0h-2.8zM14.7 248.3h2.8v1.0h-2.8zM18.0 248.3h1.4v1.0h-1.4zM19.9 248.3h2.8v1.0h-2.8zM23.2 248.3h2.3v1.0h-2.3zM26.0 248.3h3.3v1.0h-3.3zM29.7 248.3h1.4v1.0h-1.4zM2.0 249.7h0.9v1.0h-0.9zM3.4 249.7h6.1v1.0h-6.1zM10.0 249.7h1.4v1.0h-1.4zM11.9 249.7h6.6v1.0h-6.6zM18.9 249.7h5.2v1.0h-5.2zM24.6 249.7h1.9v1.0h-1.9zM26.9 249.7h1.9v1.0h-1.9zM29.3 249.7h1.4v1.0h-1.4zM31.1 249.7h2.8v1.0h-2.8zM2.0 251.2h0.9v1.0h-0.9zM3.4 251.2h2.8v1.0h-2.8zM6.7 251.2h4.7v1.0h-4.7zM11.9 251.2h1.4v1.0h-1.4zM13.8 251.2h2.3v1.0h-2.3zM16.6 251.2h0.9v1.0h-0.9zM18.0 251.2h0.5v1.0h-0.5zM18.9 251.2h4.2v1.0h-4.2zM23.6 251.2h2.8v1.0h-2.8zM2.0 255.5h0.9v1.0h-0.9zM3.4 255.5h1.4v1.0h-1.4zM5.3 255.5h0.9v1.0h-0.9zM6.7 255.5h1.9v1.0h-1.9zM9.1 255.5h0.9v1.0h-0.9zM10.5 255.5h3.8v1.0h-3.8zM14.7 255.5h3.8v1.0h-3.8zM18.9 255.5h2.3v1.0h-2.3zM21.8 255.5h2.3v1.0h-2.3zM24.6 255.5h0.9v1.0h-0.9zM26.0 255.5h1.9v1.0h-1.9zM2.0 259.8h0.9v1.0h-0.9zM3.4 259.8h1.4v1.0h-1.4zM5.3 259.8h0.9v1.0h-0.9zM6.7 259.8h1.9v1.0h-1.9zM9.1 259.8h0.9v1.0h-0.9zM10.5 259.8h2.8v1.0h-2.8zM13.8 259.8h1.4v1.0h-1.4zM15.6 259.8h1.9v1.0h-1.9zM18.0 259.8h1.9v1.0h-1.9zM20.3 259.8h0.9v1.0h-0.9zM21.8 259.8h1.4v1.0h-1.4zM23.6 259.8h1.9v1.0h-1.9zM26.0 259.8h1.9v1.0h-1.9zM28.3 259.8h0.9v1.0h-0.9zM29.7 259.8h0.5v1.0h-0.5zM30.7 259.8h3.3v1.0h-3.3zM2.0 261.3h0.9v1.0h-0.9zM3.4 261.3h4.2v1.0h-4.2zM8.1 261.3h1.9v1.0h-1.9zM10.5 261.3h2.8v1.0h-2.8zM2.0 265.6h0.9v1.0h-0.9zM3.4 265.6h1.4v1.0h-1.4zM5.3 265.6h0.9v1.0h-0.9zM6.7 265.6h1.9v1.0h-1.9zM9.1 265.6h0.9v1.0h-0.9zM10.5 265.6h6.1v1.0h-6.1zM17.1 265.6h1.9v1.0h-1.9zM19.4 265.6h2.3v1.0h-2.3zM22.2 265.6h1.9v1.0h-1.9zM24.6 265.6h4.2v1.0h-4.2zM29.3 265.6h0.9v1.0h-0.9zM30.7 265.6h0.5v1.0h-0.5zM31.6 265.6h4.2v1.0h-4.2zM36.3 265.6h1.9v1.0h-1.9zM2.0 267.0h0.9v1.0h-0.9zM3.4 267.0h0.9v1.0h-0.9zM4.8 267.0h5.2v1.0h-5.2zM2.0 271.3h0.9v1.0h-0.9zM3.4 271.3h1.9v1.0h-1.9zM5.8 271.3h1.4v1.0h-1.4zM7.6 271.3h3.3v1.0h-3.3zM11.4 271.3h0.9v1.0h-0.9zM12.8 271.3h0.9v1.0h-0.9zM14.2 271.3h4.2v1.0h-4.2zM18.9 271.3h2.3v1.0h-2.3zM21.8 271.3h1.4v1.0h-1.4zM23.6 271.3h1.9v1.0h-1.9zM26.0 271.3h3.8v1.0h-3.8zM30.2 271.3h0.9v1.0h-0.9zM31.6 271.3h1.9v1.0h-1.9zM34.0 271.3h1.4v1.0h-1.4zM2.0 272.8h0.9v1.0h-0.9zM3.4 272.8h3.8v1.0h-3.8zM7.6 272.8h2.3v1.0h-2.3zM2.0 277.1h0.9v1.0h-0.9zM3.4 277.1h1.4v1.0h-1.4zM5.3 277.1h3.8v1.0h-3.8zM9.5 277.1h0.9v1.0h-0.9zM10.9 277.1h1.4v1.0h-1.4zM12.8 277.1h1.9v1.0h-1.9zM15.2 277.1h1.4v1.0h-1.4zM17.1 277.1h3.8v1.0h-3.8zM21.3 277.1h2.3v1.0h-2.3zM24.1 277.1h0.9v1.0h-0.9zM25.5 277.1h4.7v1.0h-4.7zM30.7 277.1h6.6v1.0h-6.6zM2.0 278.5h0.9v1.0h-0.9zM3.4 278.5h2.8v1.0h-2.8zM6.7 278.5h2.3v1.0h-2.3zM9.5 278.5h1.4v1.0h-1.4zM11.4 278.5h2.8v1.0h-2.8zM14.7 278.5h4.2v1.0h-4.2zM19.4 278.5h1.9v1.0h-1.9zM21.8 278.5h0.9v1.0h-0.9zM23.2 278.5h6.1v1.0h-6.1zM29.7 278.5h4.2v1.0h-4.2zM2.0 282.9h0.9v1.0h-0.9zM3.4 282.9h3.8v1.0h-3.8zM7.6 282.9h1.9v1.0h-1.9zM10.0 282.9h1.9v1.0h-1.9zM12.3 282.9h2.8v1.0h-2.8zM15.6 282.9h1.4v1.0h-1.4zM17.5 282.9h2.8v1.0h-2.8zM20.8 282.9h1.4v1.0h-1.4zM22.7 282.9h2.3v1.0h-2.3zM25.5 282.9h2.8v1.0h-2.8zM28.8 282.9h1.9v1.0h-1.9zM31.1 282.9h0.9v1.0h-0.9zM32.6 282.9h4.2v1.0h-4.2zM2.0 284.3h0.9v1.0h-0.9zM3.4 284.3h3.8v1.0h-3.8zM7.6 284.3h2.8v1.0h-2.8zM10.9 284.3h2.3v1.0h-2.3zM13.8 284.3h2.3v1.0h-2.3zM16.6 284.3h3.3v1.0h-3.3zM20.3 284.3h0.9v1.0h-0.9zM21.8 284.3h0.5v1.0h-0.5zM22.7 284.3h1.9v1.0h-1.9zM25.0 284.3h0.9v1.0h-0.9zM26.4 284.3h2.8v1.0h-2.8zM29.7 284.3h1.9v1.0h-1.9zM32.1 284.3h0.5v1.0h-0.5zM33.0 284.3h3.8v1.0h-3.8zM2.0 285.7h0.9v1.0h-0.9zM3.4 285.7h3.8v1.0h-3.8zM7.6 285.7h3.3v1.0h-3.3zM11.4 285.7h3.8v1.0h-3.8zM15.6 285.7h0.9v1.0h-0.9zM17.1 285.7h2.3v1.0h-2.3zM19.9 285.7h5.6v1.0h-5.6zM26.0 285.7h1.9v1.0h-1.9zM28.3 285.7h3.3v1.0h-3.3zM32.1 285.7h1.9v1.0h-1.9zM34.4 285.7h0.9v1.0h-0.9zM2.0 287.2h0.9v1.0h-0.9zM3.4 287.2h3.8v1.0h-3.8zM7.6 287.2h1.4v1.0h-1.4zM9.5 287.2h1.4v1.0h-1.4zM11.4 287.2h1.9v1.0h-1.9zM13.8 287.2h1.9v1.0h-1.9zM16.1 287.2h0.9v1.0h-0.9zM17.5 287.2h2.3v1.0h-2.3zM20.3 287.2h1.9v1.0h-1.9zM22.7 287.2h1.4v1.0h-1.4zM24.6 287.2h3.8v1.0h-3.8zM28.8 287.2h0.9v1.0h-0.9zM30.2 287.2h1.4v1.0h-1.4zM32.1 287.2h2.8v1.0h-2.8zM2.0 288.6h0.9v1.0h-0.9zM3.4 288.6h2.3v1.0h-2.3zM2.0 292.9h0.9v1.0h-0.9zM3.4 292.9h2.3v1.0h-2.3zM6.2 292.9h4.7v1.0h-4.7zM11.4 292.9h1.9v1.0h-1.9zM13.8 292.9h2.3v1.0h-2.3zM16.6 292.9h1.4v1.0h-1.4zM18.5 292.9h2.8v1.0h-2.8zM21.8 292.9h0.9v1.0h-0.9zM23.2 292.9h5.2v1.0h-5.2zM28.8 292.9h0.9v1.0h-0.9zM30.2 292.9h3.3v1.0h-3.3zM2.0 297.3h0.9v1.0h-0.9zM3.4 297.3h4.7v1.0h-4.7zM8.6 297.3h1.9v1.0h-1.9zM10.9 297.3h5.6v1.0h-5.6zM17.1 297.3h1.4v1.0h-1.4zM18.9 297.3h1.9v1.0h-1.9zM21.3 297.3h0.9v1.0h-0.9zM22.7 297.3h4.2v1.0h-4.2zM27.4 297.3h1.9v1.0h-1.9zM29.7 297.3h1.9v1.0h-1.9zM32.1 297.3h0.9v1.0h-0.9zM33.5 297.3h1.4v1.0h-1.4zM35.4 297.3h2.8v1.0h-2.8zM2.0 298.7h0.9v1.0h-0.9zM3.4 298.7h2.3v1.0h-2.3zM6.2 298.7h2.8v1.0h-2.8zM9.5 298.7h1.4v1.0h-1.4zM11.4 298.7h3.8v1.0h-3.8zM15.6 298.7h4.2v1.0h-4.2zM20.3 298.7h1.4v1.0h-1.4zM22.2 298.7h0.9v1.0h-0.9zM23.6 298.7h2.8v1.0h-2.8zM26.9 298.7h4.2v1.0h-4.2zM31.6 298.7h2.8v1.0h-2.8zM34.9 298.7h1.4v1.0h-1.4zM2.0 300.1h0.9v1.0h-0.9zM3.4 300.1h2.8v1.0h-2.8zM6.7 300.1h1.4v1.0h-1.4zM8.6 300.1h2.8v1.0h-2.8zM2.0 304.5h0.9v1.0h-0.9zM3.4 304.5h1.9v1.0h-1.9zM5.8 304.5h3.8v1.0h-3.8zM10.0 304.5h3.8v1.0h-3.8zM14.2 304.5h1.4v1.0h-1.4zM16.1 304.5h1.9v1.0h-1.9zM18.5 304.5h2.8v1.0h-2.8zM21.8 304.5h1.4v1.0h-1.4zM23.6 304.5h1.9v1.0h-1.9zM26.0 304.5h3.8v1.0h-3.8zM30.2 304.5h5.2v1.0h-5.2zM2.0 305.9h0.9v1.0h-0.9zM3.4 305.9h1.9v1.0h-1.9zM5.8 305.9h4.2v1.0h-4.2zM10.5 305.9h1.4v1.0h-1.4zM12.3 305.9h1.9v1.0h-1.9zM14.7 305.9h1.9v1.0h-1.9zM17.1 305.9h3.3v1.0h-3.3zM20.8 305.9h3.8v1.0h-3.8zM25.0 305.9h0.9v1.0h-0.9zM26.4 305.9h2.8v1.0h-2.8zM29.7 305.9h0.5v1.0h-0.5zM30.7 305.9h1.9v1.0h-1.9zM2.0 307.3h0.9v1.0h-0.9zM3.4 307.3h4.2v1.0h-4.2zM8.1 307.3h1.4v1.0h-1.4zM10.0 307.3h0.9v1.0h-0.9zM11.4 307.3h1.9v1.0h-1.9zM13.8 307.3h0.9v1.0h-0.9zM15.2 307.3h2.8v1.0h-2.8zM18.5 307.3h0.9v1.0h-0.9zM19.9 307.3h3.8v1.0h-3.8zM24.1 307.3h1.4v1.0h-1.4zM26.0 307.3h1.9v1.0h-1.9zM28.3 307.3h6.6v1.0h-6.6zM35.4 307.3h0.9v1.0h-0.9zM2.0 308.8h0.9v1.0h-0.9zM3.4 308.8h3.8v1.0h-3.8zM2.0 313.1h0.9v1.0h-0.9zM3.4 313.1h2.8v1.0h-2.8zM6.7 313.1h1.9v1.0h-1.9zM9.1 313.1h3.8v1.0h-3.8zM13.3 313.1h0.9v1.0h-0.9zM14.7 313.1h0.9v1.0h-0.9zM16.1 313.1h4.2v1.0h-4.2zM20.8 313.1h6.1v1.0h-6.1zM27.4 313.1h1.9v1.0h-1.9zM29.7 313.1h3.3v1.0h-3.3zM2.0 317.4h0.9v1.0h-0.9zM3.4 317.4h1.4v1.0h-1.4zM5.3 317.4h3.3v1.0h-3.3zM9.1 317.4h1.9v1.0h-1.9zM11.4 317.4h1.9v1.0h-1.9zM13.8 317.4h2.3v1.0h-2.3zM16.6 317.4h1.9v1.0h-1.9zM18.9 317.4h3.8v1.0h-3.8zM23.2 317.4h1.9v1.0h-1.9zM25.5 317.4h0.9v1.0h-0.9zM26.9 317.4h6.1v1.0h-6.1zM33.5 317.4h4.7v1.0h-4.7zM2.0 321.7h0.9v1.0h-0.9zM3.4 321.7h1.4v1.0h-1.4zM5.3 321.7h2.8v1.0h-2.8zM8.6 321.7h0.9v1.0h-0.9zM10.0 321.7h1.4v1.0h-1.4zM11.9 321.7h2.8v1.0h-2.8zM15.2 321.7h1.4v1.0h-1.4zM17.1 321.7h1.9v1.0h-1.9zM19.4 321.7h3.8v1.0h-3.8zM23.6 321.7h2.8v1.0h-2.8zM26.9 321.7h0.9v1.0h-0.9zM28.3 321.7h2.3v1.0h-2.3zM31.1 321.7h2.3v1.0h-2.3zM34.0 321.7h2.8v1.0h-2.8zM2.0 326.1h0.9v1.0h-0.9zM3.4 326.1h3.8v1.0h-3.8zM7.6 326.1h1.9v1.0h-1.9zM10.0 326.1h2.8v1.0h-2.8zM13.3 326.1h1.9v1.0h-1.9zM15.6 326.1h3.8v1.0h-3.8zM19.9 326.1h1.9v1.0h-1.9zM22.2 326.1h0.9v1.0h-0.9zM23.6 326.1h4.2v1.0h-4.2zM28.3 326.1h0.9v1.0h-0.9zM2.0 330.4h0.9v1.0h-0.9zM3.4 330.4h4.7v1.0h-4.7zM8.6 330.4h4.7v1.0h-4.7zM13.8 330.4h0.9v1.0h-0.9zM15.2 330.4h3.3v1.0h-3.3zM18.9 330.4h1.9v1.0h-1.9zM21.3 330.4h3.8v1.0h-3.8zM2.0 334.7h0.9v1.0h-0.9zM3.4 334.7h0.9v1.0h-0.9zM4.8 334.7h3.8v1.0h-3.8zM9.1 334.7h1.9v1.0h-1.9zM11.4 334.7h3.8v1.0h-3.8zM15.6 334.7h1.9v1.0h-1.9zM18.0 334.7h2.8v1.0h-2.8zM21.3 334.7h1.4v1.0h-1.4zM23.2 334.7h3.3v1.0h-3.3zM26.9 334.7h4.7v1.0h-4.7zM32.1 334.7h0.9v1.0h-0.9zM33.5 334.7h2.8v1.0h-2.8zM2.0 336.1h0.9v1.0h-0.9zM3.4 336.1h1.9v1.0h-1.9zM5.8 336.1h3.3v1.0h-3.3zM9.5 336.1h1.4v1.0h-1.4zM11.4 336.1h0.9v1.0h-0.9zM12.8 336.1h1.9v1.0h-1.9zM15.2 336.1h0.9v1.0h-0.9zM16.6 336.1h1.9v1.0h-1.9zM18.9 336.1h0.9v1.0h-0.9zM20.3 336.1h3.8v1.0h-3.8zM24.6 336.1h0.9v1.0h-0.9zM26.0 336.1h1.4v1.0h-1.4zM27.9 336.1h3.8v1.0h-3.8zM2.0 337.6h0.9v1.0h-0.9zM3.4 337.6h4.7v1.0h-4.7zM8.6 337.6h0.9v1.0h-0.9zM10.0 337.6h1.4v1.0h-1.4zM11.9 337.6h0.9v1.0h-0.9zM13.3 337.6h4.2v1.0h-4.2zM18.0 337.6h0.5v1.0h-0.5zM18.9 337.6h3.8v1.0h-3.8zM23.2 337.6h3.3v1.0h-3.3zM26.9 337.6h0.9v1.0h-0.9zM28.3 337.6h0.9v1.0h-0.9zM29.7 337.6h3.3v1.0h-3.3zM2.0 339.0h0.9v1.0h-0.9zM3.4 339.0h4.2v1.0h-4.2zM8.1 339.0h3.3v1.0h-3.3zM11.9 339.0h4.7v1.0h-4.7zM17.1 339.0h1.4v1.0h-1.4zM18.9 339.0h4.7v1.0h-4.7zM24.1 339.0h1.4v1.0h-1.4zM26.0 339.0h4.2v1.0h-4.2zM30.7 339.0h0.5v1.0h-0.5zM31.6 339.0h3.8v1.0h-3.8zM2.0 343.3h0.9v1.0h-0.9zM3.4 343.3h3.8v1.0h-3.8zM7.6 343.3h0.9v1.0h-0.9zM9.1 343.3h1.9v1.0h-1.9zM11.4 343.3h3.8v1.0h-3.8zM15.6 343.3h0.9v1.0h-0.9zM17.1 343.3h2.3v1.0h-2.3zM19.9 343.3h1.9v1.0h-1.9zM22.2 343.3h3.3v1.0h-3.3zM26.0 343.3h2.8v1.0h-2.8zM29.3 343.3h1.4v1.0h-1.4zM31.1 343.3h3.3v1.0h-3.3zM2.0 344.8h0.9v1.0h-0.9zM3.4 344.8h1.9v1.0h-1.9zM5.8 344.8h3.8v1.0h-3.8zM10.0 344.8h0.9v1.0h-0.9zM11.4 344.8h12.7v1.0h-12.7zM24.6 344.8h0.9v1.0h-0.9zM26.0 344.8h2.3v1.0h-2.3zM2.0 349.1h0.9v1.0h-0.9zM3.4 349.1h3.8v1.0h-3.8zM7.6 349.1h1.9v1.0h-1.9zM10.0 349.1h3.3v1.0h-3.3zM13.8 349.1h1.9v1.0h-1.9zM16.1 349.1h3.8v1.0h-3.8zM20.3 349.1h1.4v1.0h-1.4zM22.2 349.1h0.9v1.0h-0.9zM23.6 349.1h1.4v1.0h-1.4zM25.5 349.1h2.3v1.0h-2.3zM28.3 349.1h1.4v1.0h-1.4zM30.2 349.1h2.3v1.0h-2.3zM33.0 349.1h1.9v1.0h-1.9zM35.4 349.1h0.9v1.0h-0.9zM2.0 350.5h0.9v1.0h-0.9zM3.4 350.5h1.4v1.0h-1.4zM5.3 350.5h1.9v1.0h-1.9zM7.6 350.5h3.8v1.0h-3.8zM11.9 350.5h2.8v1.0h-2.8zM15.2 350.5h0.9v1.0h-0.9zM16.6 350.5h4.2v1.0h-4.2zM21.3 350.5h0.9v1.0h-0.9zM22.7 350.5h2.8v1.0h-2.8zM26.0 350.5h1.4v1.0h-1.4zM27.9 350.5h2.8v1.0h-2.8zM31.1 350.5h0.9v1.0h-0.9zM32.6 350.5h3.3v1.0h-3.3zM2.0 352.0h0.9v1.0h-0.9zM3.4 352.0h4.2v1.0h-4.2zM8.1 352.0h1.4v1.0h-1.4zM10.0 352.0h1.9v1.0h-1.9zM12.3 352.0h1.9v1.0h-1.9zM14.7 352.0h0.9v1.0h-0.9zM16.1 352.0h1.4v1.0h-1.4zM18.0 352.0h2.8v1.0h-2.8zM21.3 352.0h0.9v1.0h-0.9zM22.7 352.0h4.2v1.0h-4.2zM27.4 352.0h3.8v1.0h-3.8zM31.6 352.0h1.4v1.0h-1.4zM33.5 352.0h1.4v1.0h-1.4zM2.0 353.4h0.9v1.0h-0.9zM3.4 353.4h1.9v1.0h-1.9zM5.8 353.4h1.4v1.0h-1.4zM7.6 353.4h1.9v1.0h-1.9zM10.0 353.4h1.4v1.0h-1.4zM11.9 353.4h1.9v1.0h-1.9zM14.2 353.4h1.9v1.0h-1.9zM16.6 353.4h0.9v1.0h-0.9zM18.0 353.4h4.2v1.0h-4.2zM2.0 357.7h0.9v1.0h-0.9zM3.4 357.7h6.1v1.0h-6.1zM10.0 357.7h2.3v1.0h-2.3zM12.8 357.7h1.9v1.0h-1.9zM15.2 357.7h1.4v1.0h-1.4zM17.1 357.7h1.4v1.0h-1.4zM18.9 357.7h1.9v1.0h-1.9zM21.3 357.7h1.9v1.0h-1.9zM23.6 357.7h0.9v1.0h-0.9zM25.0 357.7h0.9v1.0h-0.9zM26.4 357.7h3.8v1.0h-3.8zM2.0 362.1h0.9v1.0h-0.9zM3.4 362.1h0.9v1.0h-0.9zM4.8 362.1h3.8v1.0h-3.8zM9.1 362.1h4.2v1.0h-4.2zM13.8 362.1h1.9v1.0h-1.9zM16.1 362.1h1.9v1.0h-1.9zM18.5 362.1h3.8v1.0h-3.8zM22.7 362.1h0.9v1.0h-0.9zM24.1 362.1h1.4v1.0h-1.4zM26.0 362.1h4.2v1.0h-4.2zM30.7 362.1h2.3v1.0h-2.3zM2.0 363.5h0.9v1.0h-0.9zM3.4 363.5h3.8v1.0h-3.8zM7.6 363.5h2.8v1.0h-2.8zM10.9 363.5h1.9v1.0h-1.9zM13.3 363.5h3.8v1.0h-3.8zM17.5 363.5h4.2v1.0h-4.2zM22.2 363.5h0.9v1.0h-0.9zM23.6 363.5h2.3v1.0h-2.3zM26.4 363.5h2.8v1.0h-2.8zM29.7 363.5h2.3v1.0h-2.3zM32.6 363.5h2.8v1.0h-2.8zM35.9 363.5h0.5v1.0h-0.5zM2.0 364.9h0.9v1.0h-0.9zM3.4 364.9h1.4v1.0h-1.4zM5.3 364.9h4.2v1.0h-4.2zM10.0 364.9h0.5v1.0h-0.5zM10.9 364.9h1.9v1.0h-1.9zM13.3 364.9h2.8v1.0h-2.8zM16.6 364.9h1.9v1.0h-1.9zM18.9 364.9h0.9v1.0h-0.9zM20.3 364.9h0.9v1.0h-0.9zM21.8 364.9h3.8v1.0h-3.8zM26.0 364.9h1.9v1.0h-1.9zM28.3 364.9h6.6v1.0h-6.6zM35.4 364.9h0.9v1.0h-0.9zM2.0 366.4h0.9v1.0h-0.9zM3.4 366.4h3.8v1.0h-3.8zM7.6 366.4h1.4v1.0h-1.4zM9.5 366.4h1.9v1.0h-1.9zM11.9 366.4h0.9v1.0h-0.9zM13.3 366.4h1.9v1.0h-1.9zM15.6 366.4h0.9v1.0h-0.9zM17.1 366.4h1.9v1.0h-1.9zM19.4 366.4h4.2v1.0h-4.2zM24.1 366.4h2.8v1.0h-2.8zM27.4 366.4h4.2v1.0h-4.2zM32.1 366.4h3.3v1.0h-3.3zM35.9 366.4h0.9v1.0h-0.9zM2.0 367.8h0.9v1.0h-0.9zM3.4 367.8h4.2v1.0h-4.2zM8.1 367.8h2.3v1.0h-2.3zM2.0 372.1h0.9v1.0h-0.9zM3.4 372.1h0.9v1.0h-0.9zM4.8 372.1h2.3v1.0h-2.3zM7.6 372.1h1.4v1.0h-1.4zM9.5 372.1h1.9v1.0h-1.9zM11.9 372.1h1.4v1.0h-1.4zM13.8 372.1h1.4v1.0h-1.4zM15.6 372.1h3.8v1.0h-3.8zM19.9 372.1h1.9v1.0h-1.9zM22.2 372.1h3.3v1.0h-3.3zM26.0 372.1h0.9v1.0h-0.9zM27.4 372.1h1.4v1.0h-1.4zM29.3 372.1h3.3v1.0h-3.3zM33.0 372.1h1.9v1.0h-1.9zM2.0 373.6h0.9v1.0h-0.9zM3.4 373.6h1.9v1.0h-1.9zM5.8 373.6h1.4v1.0h-1.4zM7.6 373.6h4.2v1.0h-4.2zM12.3 373.6h0.9v1.0h-0.9zM13.8 373.6h2.8v1.0h-2.8zM17.1 373.6h2.8v1.0h-2.8zM20.3 373.6h1.9v1.0h-1.9zM22.7 373.6h2.3v1.0h-2.3zM25.5 373.6h3.8v1.0h-3.8zM2.0 377.9h0.9v1.0h-0.9zM3.4 377.9h0.9v1.0h-0.9zM4.8 377.9h2.3v1.0h-2.3zM7.6 377.9h1.4v1.0h-1.4zM9.5 377.9h3.8v1.0h-3.8zM13.8 377.9h1.9v1.0h-1.9zM16.1 377.9h1.9v1.0h-1.9zM18.5 377.9h0.9v1.0h-0.9zM19.9 377.9h2.8v1.0h-2.8zM23.2 377.9h1.9v1.0h-1.9zM25.5 377.9h1.4v1.0h-1.4zM27.4 377.9h1.9v1.0h-1.9zM29.7 377.9h2.3v1.0h-2.3zM32.6 377.9h1.9v1.0h-1.9zM34.9 377.9h1.9v1.0h-1.9zM2.0 379.3h0.9v1.0h-0.9zM3.4 379.3h2.8v1.0h-2.8zM2.0 380.8h0.9v1.0h-0.9zM3.4 380.8h0.9v1.0h-0.9zM4.8 380.8h0.9v1.0h-0.9zM6.2 380.8h0.9v1.0h-0.9zM7.6 380.8h1.9v1.0h-1.9zM10.0 380.8h2.3v1.0h-2.3zM12.8 380.8h0.9v1.0h-0.9zM14.2 380.8h4.7v1.0h-4.7zM19.4 380.8h0.9v1.0h-0.9zM20.8 380.8h1.4v1.0h-1.4zM22.7 380.8h3.8v1.0h-3.8zM26.9 380.8h3.8v1.0h-3.8zM31.1 380.8h4.2v1.0h-4.2zM35.9 380.8h0.9v1.0h-0.9zM2.0 382.2h0.9v1.0h-0.9zM3.4 382.2h2.8v1.0h-2.8zM6.7 382.2h1.9v1.0h-1.9zM9.1 382.2h0.9v1.0h-0.9zM10.5 382.2h2.3v1.0h-2.3zM13.3 382.2h1.9v1.0h-1.9zM15.6 382.2h1.9v1.0h-1.9zM18.0 382.2h0.9v1.0h-0.9zM19.4 382.2h1.9v1.0h-1.9zM21.8 382.2h1.9v1.0h-1.9zM24.1 382.2h3.8v1.0h-3.8zM28.3 382.2h0.9v1.0h-0.9zM29.7 382.2h3.8v1.0h-3.8zM34.0 382.2h1.4v1.0h-1.4zM2.0 386.5h0.9v1.0h-0.9zM3.4 386.5h1.9v1.0h-1.9zM5.8 386.5h10.3v1.0h-10.3zM16.6 386.5h0.9v1.0h-0.9zM18.0 386.5h3.8v1.0h-3.8zM22.2 386.5h1.4v1.0h-1.4zM24.1 386.5h2.3v1.0h-2.3zM26.9 386.5h0.9v1.0h-0.9zM28.3 386.5h4.7v1.0h-4.7zM33.5 386.5h1.9v1.0h-1.9zM2.0 388.0h0.9v1.0h-0.9zM3.4 388.0h1.9v1.0h-1.9zM5.8 388.0h0.9v1.0h-0.9zM7.2 388.0h3.3v1.0h-3.3zM10.9 388.0h6.1v1.0h-6.1zM17.5 388.0h1.9v1.0h-1.9zM19.9 388.0h3.8v1.0h-3.8zM24.1 388.0h2.3v1.0h-2.3zM26.9 388.0h0.9v1.0h-0.9zM28.3 388.0h1.9v1.0h-1.9zM30.7 388.0h1.4v1.0h-1.4zM32.6 388.0h3.8v1.0h-3.8zM2.0 392.3h0.9v1.0h-0.9zM3.4 392.3h1.9v1.0h-1.9zM5.8 392.3h4.2v1.0h-4.2zM10.5 392.3h0.9v1.0h-0.9zM11.9 392.3h3.8v1.0h-3.8zM16.1 392.3h3.8v1.0h-3.8zM20.3 392.3h0.9v1.0h-0.9zM21.8 392.3h3.8v1.0h-3.8zM26.0 392.3h1.9v1.0h-1.9zM28.3 392.3h1.9v1.0h-1.9zM30.7 392.3h2.3v1.0h-2.3zM33.5 392.3h0.5v1.0h-0.5zM2.0 393.7h0.9v1.0h-0.9zM3.4 393.7h4.2v1.0h-4.2zM8.1 393.7h4.2v1.0h-4.2zM2.0 398.1h0.9v1.0h-0.9zM2.0 399.5h0.9v1.0h-0.9zM3.4 399.5h1.9v1.0h-1.9zM5.8 399.5h4.2v1.0h-4.2zM10.5 399.5h3.8v1.0h-3.8zM2.0 400.9h0.9v1.0h-0.9zM2.0 403.8h0.9v1.0h-0.9zM3.4 403.8h1.4v1.0h-1.4zM5.3 403.8h2.3v1.0h-2.3zM8.1 403.8h3.8v1.0h-3.8zM12.3 403.8h1.4v1.0h-1.4zM14.2 403.8h1.9v1.0h-1.9zM16.6 403.8h0.9v1.0h-0.9zM18.0 403.8h3.3v1.0h-3.3zM21.8 403.8h2.8v1.0h-2.8zM25.0 403.8h0.9v1.0h-0.9zM26.4 403.8h4.2v1.0h-4.2zM31.1 403.8h2.3v1.0h-2.3zM34.0 403.8h2.8v1.0h-2.8zM2.0 408.1h0.9v1.0h-0.9zM3.4 408.1h1.4v1.0h-1.4zM5.3 408.1h0.9v1.0h-0.9zM6.7 408.1h0.5v1.0h-0.5zM7.6 408.1h0.9v1.0h-0.9zM9.1 408.1h3.3v1.0h-3.3zM12.8 408.1h2.8v1.0h-2.8zM16.1 408.1h4.7v1.0h-4.7zM21.3 408.1h1.4v1.0h-1.4zM23.2 408.1h0.9v1.0h-0.9zM24.6 408.1h0.5v1.0h-0.5zM25.5 408.1h2.3v1.0h-2.3zM28.3 408.1h3.3v1.0h-3.3zM32.1 408.1h0.5v1.0h-0.5zM33.0 408.1h1.4v1.0h-1.4zM34.9 408.1h0.5v1.0h-0.5zM35.9 408.1h0.9v1.0h-0.9zM2.0 409.6h0.9v1.0h-0.9zM3.4 409.6h2.8v1.0h-2.8zM6.7 409.6h3.3v1.0h-3.3zM10.5 409.6h0.9v1.0h-0.9zM11.9 409.6h1.4v1.0h-1.4zM13.8 409.6h0.9v1.0h-0.9zM15.2 409.6h2.8v1.0h-2.8zM18.5 409.6h1.9v1.0h-1.9zM20.8 409.6h0.5v1.0h-0.5zM21.8 409.6h0.9v1.0h-0.9zM23.2 409.6h2.8v1.0h-2.8zM26.4 409.6h2.8v1.0h-2.8zM2.0 413.9h0.9v1.0h-0.9zM3.4 413.9h3.8v1.0h-3.8zM7.6 413.9h1.9v1.0h-1.9zM10.0 413.9h1.4v1.0h-1.4zM11.9 413.9h4.2v1.0h-4.2zM16.6 413.9h1.9v1.0h-1.9zM18.9 413.9h4.2v1.0h-4.2zM23.6 413.9h0.9v1.0h-0.9zM25.0 413.9h4.7v1.0h-4.7zM30.2 413.9h3.3v1.0h-3.3zM2.0 418.2h0.9v1.0h-0.9zM3.4 418.2h3.8v1.0h-3.8zM7.6 418.2h4.2v1.0h-4.2zM12.3 418.2h4.7v1.0h-4.7zM17.5 418.2h1.4v1.0h-1.4zM19.4 418.2h5.2v1.0h-5.2zM2.0 422.5h0.9v1.0h-0.9zM3.4 422.5h2.3v1.0h-2.3zM6.2 422.5h1.9v1.0h-1.9zM8.6 422.5h1.9v1.0h-1.9zM10.9 422.5h3.8v1.0h-3.8zM15.2 422.5h2.3v1.0h-2.3zM18.0 422.5h1.9v1.0h-1.9zM20.3 422.5h3.3v1.0h-3.3zM2.0 429.7h0.9v1.0h-0.9zM3.4 429.7h1.9v1.0h-1.9zM5.8 429.7h3.3v1.0h-3.3zM9.5 429.7h0.9v1.0h-0.9zM10.9 429.7h1.4v1.0h-1.4zM12.8 429.7h1.9v1.0h-1.9zM15.2 429.7h1.4v1.0h-1.4zM17.1 429.7h0.9v1.0h-0.9zM18.5 429.7h1.9v1.0h-1.9zM2.0 434.1h0.9v1.0h-0.9zM3.4 434.1h0.9v1.0h-0.9zM4.8 434.1h0.5v1.0h-0.5zM5.8 434.1h2.3v1.0h-2.3zM8.6 434.1h2.3v1.0h-2.3zM11.4 434.1h2.8v1.0h-2.8zM14.7 434.1h1.4v1.0h-1.4zM16.6 434.1h2.3v1.0h-2.3zM19.4 434.1h2.8v1.0h-2.8zM22.7 434.1h1.4v1.0h-1.4zM24.6 434.1h3.3v1.0h-3.3zM28.3 434.1h1.9v1.0h-1.9zM30.7 434.1h1.9v1.0h-1.9zM33.0 434.1h2.8v1.0h-2.8zM2.0 435.5h0.9v1.0h-0.9zM3.4 435.5h1.4v1.0h-1.4zM5.3 435.5h3.3v1.0h-3.3zM9.1 435.5h1.9v1.0h-1.9zM11.4 435.5h3.3v1.0h-3.3zM15.2 435.5h0.9v1.0h-0.9zM16.6 435.5h0.5v1.0h-0.5zM17.5 435.5h2.8v1.0h-2.8zM20.8 435.5h1.9v1.0h-1.9zM23.2 435.5h2.8v1.0h-2.8zM26.4 435.5h0.9v1.0h-0.9zM27.9 435.5h2.3v1.0h-2.3zM30.7 435.5h2.8v1.0h-2.8zM34.0 435.5h0.5v1.0h-0.5zM2.0 436.9h0.9v1.0h-0.9zM3.4 436.9h2.8v1.0h-2.8zM6.7 436.9h4.2v1.0h-4.2zM11.4 436.9h1.9v1.0h-1.9zM13.8 436.9h1.9v1.0h-1.9zM16.1 436.9h3.3v1.0h-3.3zM19.9 436.9h0.9v1.0h-0.9zM21.3 436.9h3.8v1.0h-3.8zM25.5 436.9h2.8v1.0h-2.8zM28.8 436.9h0.9v1.0h-0.9zM30.2 436.9h1.9v1.0h-1.9zM32.6 436.9h0.9v1.0h-0.9zM2.0 438.4h0.9v1.0h-0.9zM3.4 438.4h4.7v1.0h-4.7zM8.6 438.4h3.8v1.0h-3.8zM12.8 438.4h3.3v1.0h-3.3zM16.6 438.4h1.9v1.0h-1.9zM18.9 438.4h1.9v1.0h-1.9zM21.3 438.4h0.9v1.0h-0.9zM22.7 438.4h4.2v1.0h-4.2zM27.4 438.4h1.4v1.0h-1.4zM29.3 438.4h3.3v1.0h-3.3zM33.0 438.4h0.9v1.0h-0.9zM34.4 438.4h1.9v1.0h-1.9zM2.0 439.8h0.9v1.0h-0.9zM3.4 439.8h3.3v1.0h-3.3zM2.0 444.1h0.9v1.0h-0.9zM3.4 444.1h2.3v1.0h-2.3zM6.2 444.1h2.8v1.0h-2.8zM9.5 444.1h1.4v1.0h-1.4zM11.4 444.1h4.2v1.0h-4.2zM16.1 444.1h4.2v1.0h-4.2zM20.8 444.1h1.4v1.0h-1.4zM22.7 444.1h4.7v1.0h-4.7zM2.0 448.5h0.9v1.0h-0.9zM3.4 448.5h2.8v1.0h-2.8zM6.7 448.5h1.9v1.0h-1.9zM9.1 448.5h0.9v1.0h-0.9zM10.5 448.5h2.8v1.0h-2.8zM13.8 448.5h1.9v1.0h-1.9zM16.1 448.5h1.4v1.0h-1.4zM18.0 448.5h2.8v1.0h-2.8zM21.3 448.5h3.3v1.0h-3.3zM25.0 448.5h0.9v1.0h-0.9zM26.4 448.5h2.8v1.0h-2.8zM29.7 448.5h4.2v1.0h-4.2zM2.0 452.8h0.9v1.0h-0.9zM3.4 452.8h3.3v1.0h-3.3zM7.2 452.8h1.9v1.0h-1.9zM9.5 452.8h3.8v1.0h-3.8zM13.8 452.8h0.9v1.0h-0.9zM15.2 452.8h1.4v1.0h-1.4zM17.1 452.8h2.8v1.0h-2.8zM20.3 452.8h1.4v1.0h-1.4zM2.0 457.1h0.9v1.0h-0.9zM3.4 457.1h3.3v1.0h-3.3zM7.2 457.1h1.9v1.0h-1.9zM9.5 457.1h3.3v1.0h-3.3zM13.3 457.1h0.9v1.0h-0.9zM14.7 457.1h1.4v1.0h-1.4zM16.6 457.1h2.8v1.0h-2.8zM19.9 457.1h1.4v1.0h-1.4zM2.0 461.4h0.9v1.0h-0.9zM2.0 462.9h0.9v1.0h-0.9zM3.4 462.9h5.2v1.0h-5.2zM9.1 462.9h3.8v1.0h-3.8zM13.3 462.9h3.8v1.0h-3.8zM2.0 464.3h0.9v1.0h-0.9zM2.0 467.2h0.9v1.0h-0.9zM3.4 467.2h3.3v1.0h-3.3zM7.2 467.2h1.4v1.0h-1.4zM9.1 467.2h5.2v1.0h-5.2zM14.7 467.2h1.9v1.0h-1.9zM17.1 467.2h3.8v1.0h-3.8zM21.3 467.2h3.3v1.0h-3.3zM25.0 467.2h1.9v1.0h-1.9zM27.4 467.2h2.3v1.0h-2.3zM30.2 467.2h0.9v1.0h-0.9zM31.6 467.2h0.9v1.0h-0.9zM33.0 467.2h2.3v1.0h-2.3zM2.0 468.6h0.9v1.0h-0.9zM3.4 468.6h5.2v1.0h-5.2zM9.1 468.6h3.3v1.0h-3.3zM12.8 468.6h4.7v1.0h-4.7zM18.0 468.6h3.3v1.0h-3.3zM21.8 468.6h6.1v1.0h-6.1zM28.3 468.6h1.4v1.0h-1.4zM30.2 468.6h1.9v1.0h-1.9zM32.6 468.6h2.3v1.0h-2.3zM35.4 468.6h1.9v1.0h-1.9zM2.0 470.1h0.9v1.0h-0.9zM3.4 470.1h0.9v1.0h-0.9zM4.8 470.1h4.2v1.0h-4.2zM9.5 470.1h1.4v1.0h-1.4zM11.4 470.1h3.8v1.0h-3.8zM15.6 470.1h1.9v1.0h-1.9zM18.0 470.1h1.9v1.0h-1.9zM20.3 470.1h4.2v1.0h-4.2zM2.0 471.5h0.9v1.0h-0.9zM2.0 472.9h0.9v1.0h-0.9zM3.4 472.9h3.3v1.0h-3.3zM7.2 472.9h0.5v1.0h-0.5zM8.1 472.9h2.8v1.0h-2.8zM11.4 472.9h1.9v1.0h-1.9zM13.8 472.9h0.9v1.0h-0.9zM15.2 472.9h4.7v1.0h-4.7zM20.3 472.9h3.3v1.0h-3.3zM24.1 472.9h1.9v1.0h-1.9zM26.4 472.9h1.9v1.0h-1.9zM28.8 472.9h2.3v1.0h-2.3zM31.6 472.9h1.4v1.0h-1.4zM33.5 472.9h2.8v1.0h-2.8zM2.0 474.4h0.9v1.0h-0.9zM3.4 474.4h3.3v1.0h-3.3zM7.2 474.4h4.7v1.0h-4.7zM12.3 474.4h4.7v1.0h-4.7zM17.5 474.4h3.3v1.0h-3.3zM21.3 474.4h3.3v1.0h-3.3zM25.0 474.4h0.9v1.0h-0.9zM26.4 474.4h1.4v1.0h-1.4zM28.3 474.4h4.2v1.0h-4.2zM33.0 474.4h1.9v1.0h-1.9zM2.0 475.8h0.9v1.0h-0.9zM3.4 475.8h4.2v1.0h-4.2zM8.1 475.8h1.4v1.0h-1.4zM10.0 475.8h3.8v1.0h-3.8zM2.0 480.1h0.9v1.0h-0.9zM3.4 480.1h9.4v1.0h-9.4zM13.3 480.1h1.9v1.0h-1.9zM15.6 480.1h2.3v1.0h-2.3zM18.5 480.1h3.3v1.0h-3.3zM22.2 480.1h1.9v1.0h-1.9zM24.6 480.1h0.9v1.0h-0.9zM26.0 480.1h2.3v1.0h-2.3zM28.8 480.1h0.9v1.0h-0.9zM30.2 480.1h1.9v1.0h-1.9zM32.6 480.1h2.8v1.0h-2.8zM2.0 481.6h0.9v1.0h-0.9zM3.4 481.6h1.9v1.0h-1.9zM5.8 481.6h0.9v1.0h-0.9zM7.2 481.6h0.9v1.0h-0.9zM8.6 481.6h1.4v1.0h-1.4zM10.5 481.6h2.8v1.0h-2.8zM13.8 481.6h0.9v1.0h-0.9zM15.2 481.6h1.9v1.0h-1.9zM17.5 481.6h2.8v1.0h-2.8zM20.8 481.6h2.3v1.0h-2.3zM23.6 481.6h1.9v1.0h-1.9zM26.0 481.6h1.4v1.0h-1.4zM27.9 481.6h0.9v1.0h-0.9zM29.3 481.6h2.8v1.0h-2.8zM32.6 481.6h3.3v1.0h-3.3zM2.0 483.0h0.9v1.0h-0.9zM3.4 483.0h1.9v1.0h-1.9zM5.8 483.0h1.9v1.0h-1.9zM8.1 483.0h2.3v1.0h-2.3zM10.9 483.0h2.3v1.0h-2.3zM13.8 483.0h0.9v1.0h-0.9zM15.2 483.0h1.9v1.0h-1.9zM17.5 483.0h2.8v1.0h-2.8zM20.8 483.0h2.3v1.0h-2.3zM2.0 487.3h0.9v1.0h-0.9zM3.4 487.3h8.9v1.0h-8.9zM12.8 487.3h2.3v1.0h-2.3zM15.6 487.3h1.4v1.0h-1.4zM17.5 487.3h5.2v1.0h-5.2zM23.2 487.3h2.3v1.0h-2.3zM26.0 487.3h0.9v1.0h-0.9zM27.4 487.3h1.9v1.0h-1.9zM29.7 487.3h1.4v1.0h-1.4zM31.6 487.3h1.9v1.0h-1.9zM34.0 487.3h1.4v1.0h-1.4zM35.9 487.3h0.9v1.0h-0.9zM2.0 488.8h0.9v1.0h-0.9zM3.4 488.8h1.9v1.0h-1.9zM5.8 488.8h2.8v1.0h-2.8zM9.1 488.8h3.8v1.0h-3.8zM13.3 488.8h1.9v1.0h-1.9zM15.6 488.8h0.9v1.0h-0.9zM17.1 488.8h2.3v1.0h-2.3zM19.9 488.8h1.9v1.0h-1.9zM22.2 488.8h1.9v1.0h-1.9zM24.6 488.8h0.9v1.0h-0.9zM26.0 488.8h2.8v1.0h-2.8zM29.3 488.8h0.9v1.0h-0.9zM30.7 488.8h3.8v1.0h-3.8zM34.9 488.8h0.9v1.0h-0.9zM2.0 490.2h0.9v1.0h-0.9zM3.4 490.2h1.9v1.0h-1.9z" fill="#93a1a1" fill-opacity="0.5"/><path d="M0.6 10.7h0.5v1.0h-0.5zM8.6 13.6h0.5v1.0h-0.5zM7.2 22.2h0.5v1.0h-0.5zM7.2 23.7h0.5v1.0h-0.5zM8.6 30.9h0.5v1.0h-0.5zM10.0 35.2h0.5v1.0h-0.5zM8.6 39.5h0.5v1.0h-0.5zM5.8 43.8h0.5v1.0h-0.5zM5.8 48.1h0.5v1.0h-0.5zM8.6 52.5h0.5v1.0h-0.5zM10.9 56.8h0.5v1.0h-0.5zM5.8 61.1h0.5v1.0h-0.5zM8.1 65.4h0.5v1.0h-0.5zM6.7 69.7h0.5v1.0h-0.5zM14.2 74.1h0.5v1.0h-0.5zM9.1 79.8h0.5v1.0h-0.5zM11.4 84.1h0.5v1.0h-0.5zM8.1 88.5h0.5v1.0h-0.5zM8.6 94.2h0.5v1.0h-0.5zM10.9 100.0h0.5v1.0h-0.5zM15.2 105.7h0.5v1.0h-0.5zM7.2 112.9h0.5v1.0h-0.5zM7.6 118.7h0.5v1.0h-0.5zM13.8 124.5h0.5v1.0h-0.5zM9.1 128.8h0.5v1.0h-0.5zM11.4 133.1h0.5v1.0h-0.5zM7.6 137.4h0.5v1.0h-0.5zM10.9 141.7h0.5v1.0h-0.5zM11.9 148.9h0.5v1.0h-0.5zM16.1 154.7h0.5v1.0h-0.5zM9.5 159.0h0.5v1.0h-0.5zM8.1 163.3h0.5v1.0h-0.5zM10.0 167.7h0.5v1.0h-0.5zM11.4 169.1h0.5v1.0h-0.5zM10.9 170.5h0.5v1.0h-0.5zM9.5 174.9h0.5v1.0h-0.5zM13.3 180.6h0.5v1.0h-0.5zM12.8 186.4h0.5v1.0h-0.5zM12.8 192.1h0.5v1.0h-0.5zM12.3 197.9h0.5v1.0h-0.5zM7.6 202.2h0.5v1.0h-0.5zM10.0 206.5h0.5v1.0h-0.5zM10.5 210.9h0.5v1.0h-0.5zM11.9 215.2h0.5v1.0h-0.5zM10.0 222.4h0.5v1.0h-0.5zM14.2 231.0h0.5v1.0h-0.5zM10.5 236.8h0.5v1.0h-0.5zM11.4 245.4h0.5v1.0h-0.5zM12.3 252.6h0.5v1.0h-0.5zM18.5 256.9h0.5v1.0h-0.5zM16.6 262.7h0.5v1.0h-0.5zM11.4 268.5h0.5v1.0h-0.5zM8.1 274.2h0.5v1.0h-0.5zM10.9 280.0h0.5v1.0h-0.5zM10.5 290.1h0.5v1.0h-0.5zM15.6 294.4h0.5v1.0h-0.5zM11.9 301.6h0.5v1.0h-0.5zM9.5 310.2h0.5v1.0h-0.5zM9.1 314.5h0.5v1.0h-0.5zM14.2 318.9h0.5v1.0h-0.5zM11.9 323.2h0.5v1.0h-0.5zM13.3 327.5h0.5v1.0h-0.5zM13.3 331.8h0.5v1.0h-0.5zM33.0 331.8h0.5v1.0h-0.5zM15.6 340.5h0.5v1.0h-0.5zM14.7 346.2h0.5v1.0h-0.5zM11.9 354.9h0.5v1.0h-0.5zM10.0 359.2h0.5v1.0h-0.5zM11.4 369.3h0.5v1.0h-0.5zM14.7 375.0h0.5v1.0h-0.5zM11.4 383.7h0.5v1.0h-0.5zM13.3 389.4h0.5v1.0h-0.5zM7.2 395.2h0.5v1.0h-0.5zM5.3 405.3h0.5v1.0h-0.5zM8.6 411.0h0.5v1.0h-0.5zM13.3 415.3h0.5v1.0h-0.5zM10.9 419.7h0.5v1.0h-0.5zM13.8 424.0h0.5v1.0h-0.5zM13.3 426.9h0.5v1.0h-0.5zM11.4 431.2h0.5v1.0h-0.5zM10.9 441.3h0.5v1.0h-0.5zM11.9 445.6h0.5v1.0h-0.5zM12.3 449.9h0.5v1.0h-0.5zM9.1 454.2h0.5v1.0h-0.5zM10.9 458.5h0.5v1.0h-0.5zM6.7 477.3h0.5v1.0h-0.5zM12.3 484.5h0.5v1.0h-0.5zM11.9 491.7h0.5v1.0h-0.5zM0.6 493.1h0.5v1.0h-0.5z" fill="#657b83" fill-opacity="0.35"/><path d="M2.0 13.6h6.6v1.0h-6.6zM9.5 13.6h7.0v1.0h-7.0zM17.1 13.6h2.8v1.0h-2.8zM20.3 13.6h0.5v1.0h-0.5zM21.3 13.6h11.8v1.0h-11.8zM2.0 22.2h5.2v1.0h-5.2zM8.1 22.2h1.4v1.0h-1.4zM2.0 23.7h5.2v1.0h-5.2zM2.0 30.9h6.6v1.0h-6.6zM2.0 35.2h8.0v1.0h-8.0zM10.9 35.2h17.9v1.0h-17.9zM2.0 39.5h6.6v1.0h-6.6zM2.0 43.8h3.8v1.0h-3.8zM2.0 48.1h3.8v1.0h-3.8zM2.0 52.5h6.6v1.0h-6.6zM2.0 56.8h8.9v1.0h-8.9zM2.0 61.1h3.8v1.0h-3.8zM2.0 65.4h6.1v1.0h-6.1zM2.0 69.7h4.7v1.0h-4.7zM2.0 74.1h12.2v1.0h-12.2zM2.0 79.8h7.0v1.0h-7.0zM2.0 84.1h9.4v1.0h-9.4zM2.0 88.5h6.1v1.0h-6.1zM2.0 94.2h6.6v1.0h-6.6zM2.0 100.0h8.9v1.0h-8.9zM2.0 105.7h13.2v1.0h-13.2zM2.0 112.9h5.2v1.0h-5.2zM8.1 112.9h3.3v1.0h-3.3zM2.0 118.7h5.6v1.0h-5.6zM2.0 124.5h11.8v1.0h-11.8zM2.0 128.8h7.0v1.0h-7.0zM2.0 133.1h9.4v1.0h-9.4zM2.0 137.4h5.6v1.0h-5.6zM8.6 137.4h8.5v1.0h-8.5zM17.5 137.4h0.5v1.0h-0.5zM18.5 137.4h8.9v1.0h-8.9zM2.0 141.7h8.9v1.0h-8.9zM11.9 141.7h5.6v1.0h-5.6zM18.0 141.7h2.8v1.0h-2.8zM21.3 141.7h6.1v1.0h-6.1zM27.9 141.7h0.5v1.0h-0.5zM28.8 141.7h5.2v1.0h-5.2zM34.4 141.7h0.5v1.0h-0.5zM35.4 141.7h12.2v1.0h-12.2zM2.0 148.9h9.9v1.0h-9.9zM2.0 154.7h14.1v1.0h-14.1zM2.0 159.0h7.5v1.0h-7.5zM2.0 163.3h6.1v1.0h-6.1zM9.1 163.3h4.2v1.0h-4.2zM2.0 167.7h8.0v1.0h-8.0zM2.0 169.1h9.4v1.0h-9.4zM2.0 170.5h8.9v1.0h-8.9zM2.0 174.9h7.5v1.0h-7.5zM2.0 180.6h11.3v1.0h-11.3zM2.0 186.4h10.8v1.0h-10.8zM2.0 192.1h10.8v1.0h-10.8zM2.0 197.9h10.3v1.0h-10.3zM2.0 202.2h5.6v1.0h-5.6zM2.0 206.5h8.0v1.0h-8.0zM2.0 210.9h8.5v1.0h-8.5zM2.0 215.2h9.9v1.0h-9.9zM2.0 222.4h8.0v1.0h-8.0zM2.0 231.0h12.2v1.0h-12.2zM2.0 236.8h8.5v1.0h-8.5zM11.4 236.8h5.6v1.0h-5.6zM2.0 245.4h9.4v1.0h-9.4zM2.0 252.6h10.3v1.0h-10.3zM2.0 256.9h16.4v1.0h-16.4zM2.0 262.7h14.6v1.0h-14.6zM2.0 268.5h9.4v1.0h-9.4zM2.0 274.2h6.1v1.0h-6.1zM2.0 280.0h8.9v1.0h-8.9zM11.9 280.0h3.8v1.0h-3.8zM16.1 280.0h3.8v1.0h-3.8zM2.0 290.1h8.5v1.0h-8.5zM11.4 290.1h3.8v1.0h-3.8zM2.0 294.4h13.6v1.0h-13.6zM2.0 301.6h9.9v1.0h-9.9zM12.8 301.6h4.2v1.0h-4.2zM2.0 310.2h7.5v1.0h-7.5zM2.0 314.5h7.0v1.0h-7.0zM2.0 318.9h12.2v1.0h-12.2zM2.0 323.2h9.9v1.0h-9.9zM2.0 327.5h11.3v1.0h-11.3zM14.2 327.5h3.3v1.0h-3.3zM18.0 327.5h0.5v1.0h-0.5zM18.9 327.5h3.8v1.0h-3.8zM23.2 327.5h3.8v1.0h-3.8zM27.4 327.5h0.5v1.0h-0.5zM28.3 327.5h16.0v1.0h-16.0zM2.0 331.8h11.3v1.0h-11.3zM15.2 331.8h5.6v1.0h-5.6zM21.3 331.8h5.6v1.0h-5.6zM27.4 331.8h5.6v1.0h-5.6zM34.0 331.8h1.9v1.0h-1.9zM2.0 340.5h13.6v1.0h-13.6zM2.0 346.2h12.7v1.0h-12.7zM2.0 354.9h9.9v1.0h-9.9zM2.0 359.2h8.0v1.0h-8.0zM2.0 369.3h9.4v1.0h-9.4zM2.0 375.0h12.7v1.0h-12.7zM2.0 383.7h9.4v1.0h-9.4zM2.0 389.4h11.3v1.0h-11.3zM2.0 395.2h5.2v1.0h-5.2zM2.0 405.3h3.3v1.0h-3.3zM6.2 405.3h11.3v1.0h-11.3zM2.0 411.0h6.6v1.0h-6.6zM2.0 415.3h11.3v1.0h-11.3zM2.0 419.7h8.9v1.0h-8.9zM2.0 424.0h11.8v1.0h-11.8zM2.0 426.9h11.3v1.0h-11.3zM2.0 431.2h9.4v1.0h-9.4zM2.0 441.3h8.9v1.0h-8.9zM11.9 441.3h3.3v1.0h-3.3zM2.0 445.6h9.9v1.0h-9.9zM12.8 445.6h4.2v1.0h-4.2zM2.0 449.9h10.3v1.0h-10.3zM2.0 454.2h7.0v1.0h-7.0zM2.0 458.5h8.9v1.0h-8.9zM2.0 477.3h4.7v1.0h-4.7zM2.0 484.5h10.3v1.0h-10.3zM2.0 491.7h9.9v1.0h-9.9z" fill="#2aa198" fill-opacity="0.45"/><path d="M8.1 23.7h0.9v1.0h-0.9zM6.7 48.1h0.5v1.0h-0.5zM7.6 69.7h0.5v1.0h-0.5zM8.6 118.7h0.5v1.0h-0.5zM10.9 167.7h0.5v1.0h-0.5zM12.3 169.1h0.5v1.0h-0.5zM11.9 170.5h0.5v1.0h-0.5zM11.4 210.9h0.5v1.0h-0.5zM12.8 215.2h0.5v1.0h-0.5zM20.3 280.0h2.8v1.0h-2.8zM15.2 318.9h3.3v1.0h-3.3zM12.8 323.2h0.9v1.0h-0.9zM9.5 411.0h1.4v1.0h-1.4z" fill="#d33682" fill-opacity="0.4"/><path d="M9.5 30.9h1.4v1.0h-1.4zM6.7 61.1h1.4v1.0h-1.4zM13.3 252.6h7.5v1.0h-7.5zM14.2 331.8h0.5v1.0h-0.5zM36.3 331.8h0.9v1.0h-0.9z" fill="#dc322f" fill-opacity="0.4"/><path d="M9.5 39.5h1.9v1.0h-1.9zM6.7 43.8h1.9v1.0h-1.9zM9.5 52.5h1.9v1.0h-1.9zM11.9 56.8h1.9v1.0h-1.9zM9.1 65.4h2.3v1.0h-2.3zM15.2 74.1h2.3v1.0h-2.3zM10.0 79.8h1.9v1.0h-1.9zM12.3 84.1h1.9v1.0h-1.9zM9.1 88.5h1.9v1.0h-1.9zM9.5 94.2h1.9v1.0h-1.9zM11.9 100.0h2.3v1.0h-2.3zM16.1 105.7h1.9v1.0h-1.9zM14.7 124.5h1.9v1.0h-1.9zM10.0 128.8h2.3v1.0h-2.3zM12.3 133.1h1.9v1.0h-1.9zM12.8 148.9h2.3v1.0h-2.3zM17.1 154.7h2.3v1.0h-2.3zM10.5 159.0h2.3v1.0h-2.3zM10.5 174.9h1.9v1.0h-1.9zM14.2 180.6h1.9v1.0h-1.9zM13.8 186.4h1.9v1.0h-1.9zM13.8 192.1h1.9v1.0h-1.9zM13.3 197.9h2.3v1.0h-2.3zM8.6 202.2h1.9v1.0h-1.9zM10.9 206.5h1.9v1.0h-1.9zM10.9 222.4h1.9v1.0h-1.9zM15.2 231.0h2.3v1.0h-2.3zM12.3 245.4h1.9v1.0h-1.9zM19.4 256.9h2.3v1.0h-2.3zM17.5 262.7h2.3v1.0h-2.3zM12.3 268.5h2.3v1.0h-2.3zM9.1 274.2h2.3v1.0h-2.3zM16.6 294.4h1.9v1.0h-1.9zM10.5 310.2h1.9v1.0h-1.9zM10.0 314.5h1.9v1.0h-1.9zM16.6 340.5h2.3v1.0h-2.3zM15.6 346.2h2.3v1.0h-2.3zM12.8 354.9h2.3v1.0h-2.3zM10.9 359.2h1.9v1.0h-1.9zM12.3 369.3h2.3v1.0h-2.3zM15.6 375.0h1.9v1.0h-1.9zM12.3 383.7h1.9v1.0h-1.9zM14.2 389.4h2.3v1.0h-2.3zM8.1 395.2h1.9v1.0h-1.9zM14.2 415.3h1.9v1.0h-1.9zM11.9 419.7h1.9v1.0h-1.9zM14.7 424.0h2.3v1.0h-2.3zM14.2 426.9h1.9v1.0h-1.9zM12.3 431.2h2.3v1.0h-2.3zM13.3 449.9h1.9v1.0h-1.9zM10.0 454.2h2.3v1.0h-2.3zM11.9 458.5h2.3v1.0h-2.3zM7.6 477.3h1.9v1.0h-1.9zM13.3 484.5h2.3v1.0h-2.3zM12.8 491.7h1.9v1.0h-1.9z" fill="#b58900" fill-opacity="0.4"/></svg></div>
<div class="abs" style="left:973px;top:65px;width:39px;height:467px;background:#fdf6e3;border-left:1px solid #bfbaac;box-shadow:inset 1px 0 0 #e2ddcf;overflow:hidden"><svg width="38" height="467" style="position:absolute;left:0;top:0"><path d="M0.6 3.5h0.5v1.0h-0.5zM8.6 4.9h0.5v1.0h-0.5zM10.9 6.4h0.5v1.0h-0.5zM7.2 7.8h0.5v1.0h-0.5zM8.6 9.3h0.5v1.0h-0.5zM7.2 10.7h0.5v1.0h-0.5zM0.6 12.1h0.5v1.0h-0.5z" fill="#657b83" fill-opacity="0.35"/><path d="M2.0 4.9h6.6v1.0h-6.6zM9.5 4.9h7.0v1.0h-7.0zM17.1 4.9h2.8v1.0h-2.8zM20.3 4.9h0.5v1.0h-0.5zM21.3 4.9h8.0v1.0h-8.0zM29.7 4.9h8.0v1.0h-8.0zM2.0 6.4h8.9v1.0h-8.9zM2.0 7.8h5.2v1.0h-5.2zM8.1 7.8h2.8v1.0h-2.8zM11.4 7.8h1.9v1.0h-1.9zM13.8 7.8h1.9v1.0h-1.9zM2.0 9.3h6.6v1.0h-6.6zM15.2 9.3h6.1v1.0h-6.1zM2.0 10.7h5.2v1.0h-5.2z" fill="#2aa198" fill-opacity="0.45"/><path d="M11.9 6.4h2.3v1.0h-2.3z" fill="#b58900" fill-opacity="0.4"/><path d="M9.5 9.3h5.2v1.0h-5.2z" fill="#dc322f" fill-opacity="0.4"/><path d="M8.1 10.7h0.9v1.0h-0.9z" fill="#d33682" fill-opacity="0.4"/></svg></div>
<div class="abs" style="left:499px;top:67px;width:12px;height:477px;background:#2b2b29"></div>
<div class="abs" style="left:502px;top:70px;width:6px;height:23px;border-radius:3px;background:#50504d"></div>
<div class="abs" style="left:511px;top:65px;width:1px;height:479px;background:#3a3a38"></div>
<div class="abs" style="left:1012px;top:67px;width:12px;height:477px;background:#2b2b29"></div>
<div class="abs" style="left:1014.5px;top:69px;width:6px;height:362px;border-radius:3px;background:#4a4a48"></div>
<div class="abs" style="left:0;top:532px;width:499px;height:12px;background:#2b2b29;border-top:1px solid #1e1e1c"></div>
<div class="abs" style="left:3px;top:535px;width:153px;height:6px;border-radius:3px;background:#4a4b4a"></div>
<div class="abs" style="left:512px;top:532px;width:500px;height:12px;background:#2b2b29;border-top:1px solid #1e1e1c"></div>
<div class="abs" style="left:515px;top:535px;width:411px;height:6px;border-radius:3px;background:#4a4b4a"></div>
<div id="status" class="abs"></div>
<div class="abs st" style="left:24px">Line 8, Column 1</div>
<div class="abs" style="left:879px;top:545px;width:1px;height:14px;background:#6a6a6a"></div>
<div class="abs" style="left:949px;top:545px;width:1px;height:14px;background:#6a6a6a"></div>
<div class="abs st" style="left:891px">Tab Size: 4</div>
<div class="abs st" style="left:975px;letter-spacing:-0.9px">JSON</div>
<svg class="abs" style="left:0;top:544px" width="20" height="15"><rect x="7.5" y="4.5" width="9" height="7" fill="none" stroke="#c8c8c8" stroke-width="1"/><rect x="7.5" y="9" width="9" height="1" fill="#c8c8c8"/></svg>
</body></html>
